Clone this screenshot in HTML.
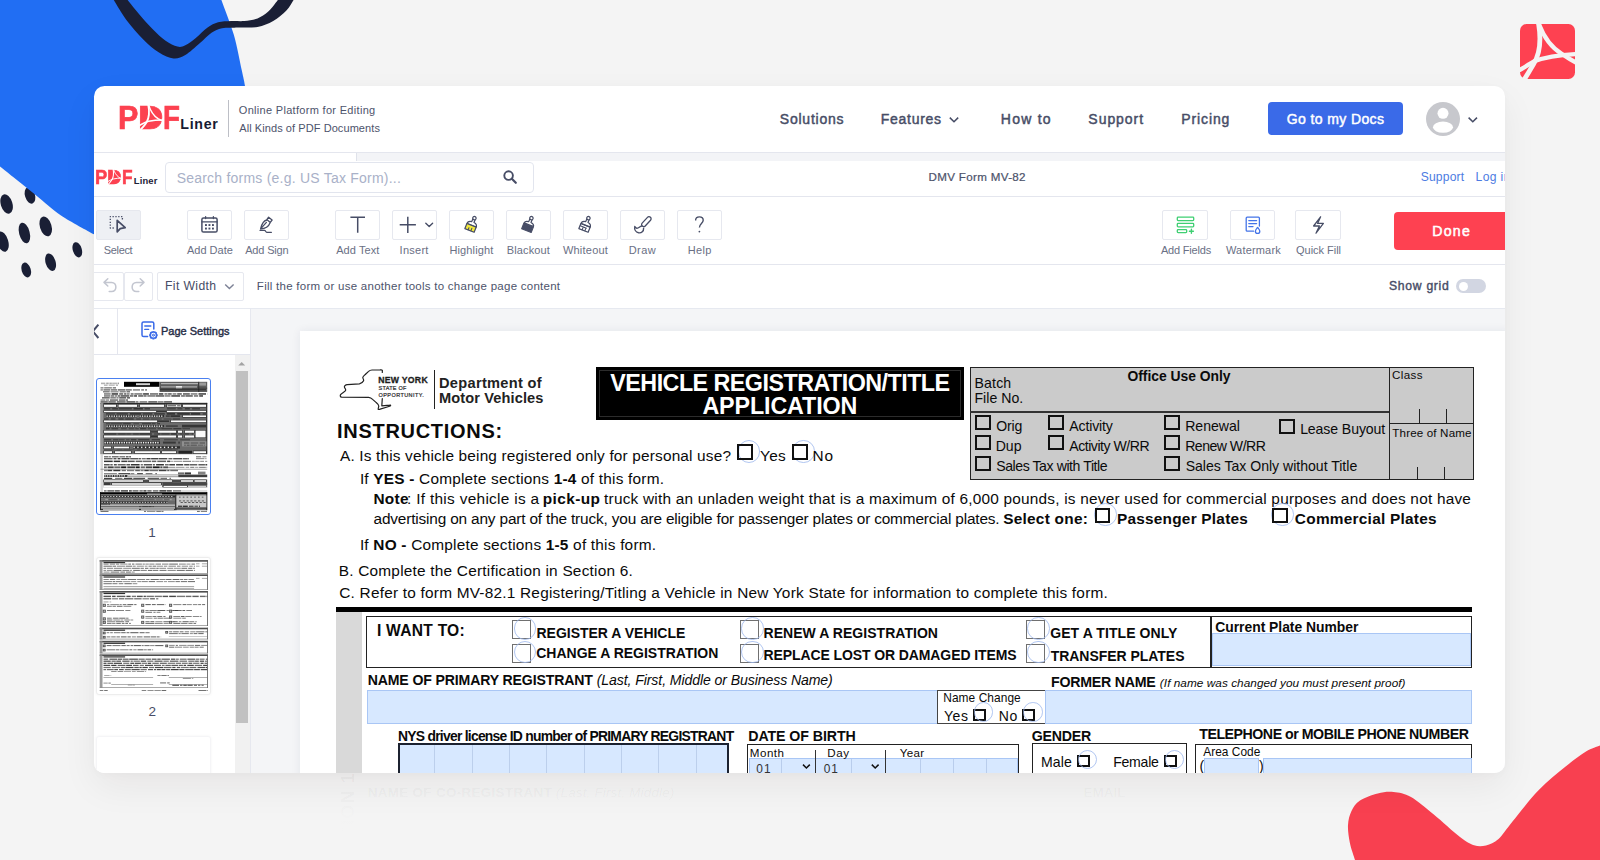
<!DOCTYPE html>
<html lang="en"><head><meta charset="utf-8"><title>DMV Form MV-82 - PDFLiner</title>
<style>
html,body{margin:0;padding:0;}
body{width:1600px;height:860px;overflow:hidden;background:#f4f4f4;font-family:'Liberation Sans',sans-serif;position:relative;}
.t{position:absolute;white-space:pre;display:block;}
.abs{position:absolute;}
#card{position:absolute;left:94px;top:86px;width:1411px;height:687px;border-radius:10.5px;background:#fff;overflow:hidden;box-shadow:0 14px 36px rgba(40,20,20,0.06), 0 2px 10px rgba(40,20,20,0.025);}
#in{position:absolute;left:-94px;top:-86px;width:1600px;height:860px;}
.tb{position:absolute;top:210px;width:43.6px;height:27.8px;margin-left:-0.2px;border:1px solid #e6e8ef;border-radius:2px;background:#fff;box-sizing:content-box;}
.cb{position:absolute;border:2px solid #111;box-sizing:border-box;}
.fld{position:absolute;background:#d7e8ff;border:1px solid #a9c6f5;box-sizing:border-box;}
.ring{position:absolute;border:1px solid #9db8ee;border-radius:50%;box-sizing:border-box;opacity:.8}
.ln{position:absolute;background:#111;}
</style></head><body>

<svg class="abs" style="left:0;top:0" width="1600" height="860" viewBox="0 0 1600 860">
<g fill="#1a1f35">
<ellipse cx="30" cy="195.4" rx="5" ry="8.5" transform="rotate(-17 30 195.4)"/>
</g>
<path d="M-2,-2 L221.4,-2.0 C221.4,-1.7 219.3,-6.2 221.4,0.0 C223.5,6.2 230.5,23.3 233.9,35.0 C237.3,46.7 239.8,61.5 241.7,70.0 C243.5,78.5 243.9,79.3 245.0,86.0 C246.1,92.7 247.5,106.0 248.0,110.0 L248,300 L96,300 L96.0,236.0 C95.7,235.7 99.8,237.7 94.0,234.3 C88.2,230.9 70.8,222.0 61.0,215.4 C51.2,208.8 45.2,202.6 35.0,194.5 C24.8,186.4 6.3,171.7 0.0,166.6 C-6.3,161.5 -2.5,164.4 -3.0,164.0 Z" fill="#216ef3"/>
<path d="M112.0,-3.0 C112.3,-2.5 111.4,-3.8 113.8,0.0 C116.2,3.8 121.3,13.1 126.2,19.7 C131.1,26.3 137.8,33.9 143.3,39.4 C148.8,44.9 154.0,49.3 159.0,52.5 C164.0,55.7 169.1,58.0 173.5,58.4 C177.9,58.8 180.9,57.5 185.3,55.0 C189.7,52.5 195.3,47.0 199.7,43.3 C204.1,39.6 207.8,35.3 211.5,32.8 C215.2,30.3 217.6,29.1 222.0,28.2 C226.4,27.3 231.9,27.8 237.8,27.6 C243.7,27.4 251.6,28.0 257.5,26.9 C263.4,25.8 268.4,23.7 273.2,21.0 C278.0,18.3 283.0,14.0 286.4,10.5 C289.8,7.0 292.1,2.2 293.6,0.0 C295.1,-2.2 295.2,-2.5 295.5,-3.0 L279.5,-3.0 C279.2,-2.5 278.4,-0.9 277.8,0.0 C277.2,0.9 277.5,0.6 275.9,2.6 C274.3,4.6 271.1,9.2 268.0,11.8 C264.9,14.4 261.4,16.9 257.5,18.4 C253.6,19.9 248.8,20.6 244.4,21.0 C240.0,21.4 235.6,20.8 231.2,21.0 C226.8,21.2 222.0,21.2 218.1,22.3 C214.2,23.4 211.3,25.0 207.6,27.6 C203.9,30.2 199.5,35.0 195.8,38.0 C192.1,41.0 188.4,43.9 185.3,45.3 C182.2,46.7 180.7,47.4 177.4,46.6 C174.1,45.8 169.8,43.7 165.6,40.7 C161.4,37.8 156.9,33.3 152.5,28.9 C148.1,24.5 143.6,19.2 139.4,14.4 C135.2,9.6 129.9,2.9 127.6,0.0 C125.3,-2.9 125.9,-2.5 125.6,-3.0 Z" fill="#1a1f35"/>
<g fill="#1a1f35">
<ellipse cx="6.6" cy="204" rx="5.8" ry="10" transform="rotate(-17 6.6 204)"/>
<ellipse cx="45.7" cy="226.4" rx="5.8" ry="10.2" transform="rotate(-17 45.7 226.4)"/>
<ellipse cx="24.4" cy="233" rx="5.3" ry="10.5" transform="rotate(-15 24.4 233)"/>
<ellipse cx="2.6" cy="241.6" rx="5.6" ry="10.5" transform="rotate(-17 2.6 241.6)"/>
<ellipse cx="77.3" cy="249.8" rx="4.5" ry="7.8" transform="rotate(-17 77.3 249.8)"/>
<ellipse cx="50.6" cy="262.2" rx="5" ry="9" transform="rotate(-17 50.6 262.2)"/>
<ellipse cx="26.2" cy="270" rx="4.6" ry="7.6" transform="rotate(-17 26.2 270)"/>
</g>
<path d="M1604.0,744.0 C1603.3,744.2 1603.0,744.1 1600.0,745.4 C1597.0,746.6 1591.8,747.9 1586.0,751.5 C1580.2,755.1 1572.9,760.6 1565.0,767.0 C1557.1,773.4 1547.5,780.9 1538.8,790.0 C1530.0,799.1 1519.2,813.3 1512.5,821.5 C1505.8,829.7 1502.9,835.0 1498.5,839.0 C1494.1,843.0 1490.1,844.4 1486.0,845.4 C1481.9,846.4 1478.3,846.6 1474.0,845.2 C1469.7,843.8 1466.7,842.1 1460.0,837.0 C1453.3,831.9 1441.9,821.2 1433.8,814.5 C1425.6,807.8 1417.7,800.8 1411.0,797.0 C1404.3,793.2 1399.0,792.6 1393.5,792.0 C1388.0,791.4 1383.3,792.1 1377.8,793.5 C1372.2,794.9 1364.4,797.6 1360.0,800.5 C1355.6,803.4 1353.5,806.9 1351.5,811.0 C1349.5,815.1 1348.3,819.8 1348.0,825.0 C1347.7,830.2 1348.6,836.7 1349.8,842.5 C1350.9,848.3 1354.0,856.4 1355.0,860.0 C1356.0,863.6 1355.8,863.3 1356.0,864.0 L1604,864 Z" fill="#f84050"/>
</svg>
<svg class="abs" style="left:1520px;top:24px" width="55" height="55" viewBox="0 0 55 55">
<rect x="0" y="0" width="55" height="55" rx="6.5" fill="#fe4151"/>
<g fill="none" stroke="#f4f4f4" stroke-linecap="butt">
<path d="M18.5,-1 C21,14 20,30 13.6,40 C10,46 7.4,50.4 4,56" stroke-width="4.8"/>
<path d="M18.5,-1 C24,14 32,24 42,30 C47,33.5 52,36.5 56,38.5" stroke-width="4.3"/>
<path d="M-1,46.4 C6,42.4 10,39.5 14,37.3 C24,33.5 36,31 56,30" stroke-width="4.3"/>
</g></svg>
<span class="t" style="left:367.70px;top:786.00px;font-size:13.4px;line-height:13.4px;font-weight:700;color:rgba(0,0,0,.055);letter-spacing:0.345px;">NAME OF CO-REGISTRANT</span>
<span class="t" style="left:555.87px;top:786.00px;font-size:13.4px;line-height:13.4px;font-weight:400;color:rgba(0,0,0,.05);font-style:italic;letter-spacing:0.192px;">(Last, First, Middle)</span>
<span class="t" style="left:1083.60px;top:786.00px;font-size:13.4px;line-height:13.4px;font-weight:700;color:rgba(0,0,0,.04);letter-spacing:0.038px;">EMAIL</span>
<span class="t" style="left:339px;top:886px;font-size:18px;line-height:18px;font-weight:700;color:rgba(0,0,0,.045);transform-origin:0 0;transform:rotate(-90deg);letter-spacing:1.2px;width:114px;text-align:right">SECTION 1</span>
<div class="abs" style="left:0;top:776px;width:1340px;height:84px;background:linear-gradient(to bottom,rgba(244,244,244,0) 0,rgba(244,244,244,.35) 18px,rgba(244,244,244,.9) 42px,#f4f4f4 56px)"></div>
<div id="card"><div id="in">
<span class="abs" style="left:0;top:0"><span class="t" style="left:118.20px;top:100.90px;font-size:32.2px;line-height:32.2px;font-weight:700;color:#fc4150;-webkit-text-stroke:0.7px #fc4150;transform-origin:0 0;transform:scale(0.947,1.045)">P</span><span class="t" style="left:137.80px;top:100.90px;font-size:32.2px;line-height:32.2px;font-weight:700;color:#fc4150;-webkit-text-stroke:0.7px #fc4150;transform-origin:0 0;transform:scale(1.090,1.045)">D</span><span class="t" style="left:162.70px;top:100.90px;font-size:32.2px;line-height:32.2px;font-weight:700;color:#fc4150;-webkit-text-stroke:0.7px #fc4150;transform-origin:0 0;transform:scale(0.860,1.045)">F</span></span>
<svg class="abs" style="left:136px;top:102px" width="30" height="30" viewBox="136 102 30 30"><path d="M144.6,109.6 H152 C157.4,109.6 158.4,114 158.4,117.6 C158.4,121.6 157.4,126 152,126 H144.6 Z" fill="#fc4150"/>
<g fill="none" stroke="#fff" stroke-linecap="butt">
<path d="M148.2,104.6 C149.5,111 149.3,117.6 146.6,122.2 C145,125 143,127.2 139.8,130.4" stroke-width="1.8"/>
<path d="M148.5,104.6 C150.4,111 153.6,115.7 158,118.7 C159.6,119.7 161,120.5 163.2,121.3" stroke-width="1.55"/>
<path d="M139.2,125.6 C142.6,123.7 145.6,122.1 148.6,121.3 C153,120.3 157.6,119.9 163.2,119.9" stroke-width="1.55"/>
</g></svg>
<span class="t" style="left:180.35px;top:117.00px;font-size:14.2px;line-height:14.2px;font-weight:700;color:#161b33;letter-spacing:0.694px;">Liner</span>
<div class="abs" style="left:228px;top:100px;width:1.4px;height:37px;background:#bdbfc6"></div>
<span class="t" style="left:238.78px;top:105.00px;font-size:11px;line-height:11px;font-weight:400;color:#4d536b;letter-spacing:0.309px;">Online Platform for Editing</span>
<span class="t" style="left:239.28px;top:123.00px;font-size:11px;line-height:11px;font-weight:400;color:#4d536b;letter-spacing:0.074px;">All Kinds of PDF Documents</span>
<span class="t" style="left:779.86px;top:112.00px;font-size:14px;line-height:14px;font-weight:400;color:#474d66;letter-spacing:0.756px;-webkit-text-stroke:0.45px #474d66;">Solutions</span>
<span class="t" style="left:880.85px;top:112.00px;font-size:14px;line-height:14px;font-weight:400;color:#474d66;letter-spacing:0.701px;-webkit-text-stroke:0.45px #474d66;">Features</span>
<svg class="abs" style="left:948px;top:115px" width="12" height="10" viewBox="0 0 12 10"><path d="M1.8,2.6 L6,6.8 L10.2,2.6" fill="none" stroke="#474d66" stroke-width="1.5"/></svg>
<span class="t" style="left:1000.85px;top:112.00px;font-size:14px;line-height:14px;font-weight:400;color:#474d66;letter-spacing:1.232px;-webkit-text-stroke:0.45px #474d66;">How to</span>
<span class="t" style="left:1088.36px;top:112.00px;font-size:14px;line-height:14px;font-weight:400;color:#474d66;letter-spacing:0.949px;-webkit-text-stroke:0.45px #474d66;">Support</span>
<span class="t" style="left:1181.35px;top:112.00px;font-size:14px;line-height:14px;font-weight:400;color:#474d66;letter-spacing:0.876px;-webkit-text-stroke:0.45px #474d66;">Pricing</span>
<div class="abs" style="left:1268px;top:102px;width:135px;height:33px;background:#3a6ae8;border-radius:4px"></div>
<span class="t" style="left:1286.80px;top:112.00px;font-size:14px;line-height:14px;font-weight:400;color:#fff;letter-spacing:0.385px;-webkit-text-stroke:0.45px #fff;">Go to my Docs</span>
<svg class="abs" style="left:1426px;top:102px" width="34" height="34" viewBox="0 0 34 34">
<circle cx="17" cy="17" r="17" fill="#c7c8cd"/><circle cx="17" cy="11.3" r="5.5" fill="#fff"/>
<ellipse cx="17" cy="25.2" rx="10" ry="5.6" fill="#fff"/></svg>
<svg class="abs" style="left:1467px;top:115px" width="12" height="10" viewBox="0 0 12 10"><path d="M1.6,2.6 L5.8,6.8 L10,2.6" fill="none" stroke="#474d66" stroke-width="1.5"/></svg>
<div class="abs" style="left:94px;top:152px;width:1411px;height:1px;background:#e4e6ee"></div>
<div class="abs" style="left:356px;top:153px;width:1149px;height:8px;background:#f3f4f7"></div>
<div class="abs" style="left:356px;top:153px;width:1px;height:8px;background:#dfe2ea"></div>
<span class="abs" style="left:0;top:0"><span class="t" style="left:94.56px;top:167.10px;font-size:19.6px;line-height:19.6px;font-weight:700;color:#fc4150;-webkit-text-stroke:0.5px #fc4150;transform-origin:0 0;transform:scale(0.940,1.054)">P</span><span class="t" style="left:106.98px;top:167.10px;font-size:19.6px;line-height:19.6px;font-weight:700;color:#fc4150;-webkit-text-stroke:0.5px #fc4150;transform-origin:0 0;transform:scale(1.020,1.054)">D</span><span class="t" style="left:122.36px;top:167.10px;font-size:19.6px;line-height:19.6px;font-weight:700;color:#fc4150;-webkit-text-stroke:0.5px #fc4150;transform-origin:0 0;transform:scale(0.886,1.054)">F</span></span>
<svg class="abs" style="left:104px;top:166px" width="22" height="22" viewBox="104 166 22 22"><g transform="translate(108 169.25) scale(.608 .641) translate(-140 -106.1)"><path d="M144.6,109.6 H152 C157.4,109.6 158.4,114 158.4,117.6 C158.4,121.6 157.4,126 152,126 H144.6 Z" fill="#fc4150"/>
<g fill="none" stroke="#fff" stroke-linecap="butt">
<path d="M148.2,104.6 C149.5,111 149.3,117.6 146.6,122.2 C145,125 143,127.2 139.8,130.4" stroke-width="1.8"/>
<path d="M148.5,104.6 C150.4,111 153.6,115.7 158,118.7 C159.6,119.7 161,120.5 163.2,121.3" stroke-width="1.55"/>
<path d="M139.2,125.6 C142.6,123.7 145.6,122.1 148.6,121.3 C153,120.3 157.6,119.9 163.2,119.9" stroke-width="1.55"/>
</g></g></svg>
<span class="t" style="left:133.77px;top:176.00px;font-size:9.4px;line-height:9.4px;font-weight:700;color:#1d2238;letter-spacing:0.162px;">Liner</span>
<div class="abs" style="left:165px;top:162px;width:367px;height:29px;border:1px solid #e2e5ee;border-radius:4px;box-sizing:content-box"></div>
<span class="t" style="left:176.66px;top:171.00px;font-size:14px;line-height:14px;font-weight:400;color:#a9b1c8;letter-spacing:0.222px;">Search forms (e.g. US Tax Form)...</span>
<svg class="abs" style="left:502px;top:169px" width="16" height="16" viewBox="0 0 16 16"><circle cx="6.6" cy="6.6" r="4.3" fill="none" stroke="#474d66" stroke-width="1.9"/><path d="M9.8,9.8 L13.8,13.8" stroke="#474d66" stroke-width="2.2" stroke-linecap="round"/></svg>
<span class="t" style="left:928.55px;top:171.00px;font-size:11.6px;line-height:11.6px;font-weight:400;color:#4d536b;letter-spacing:0.328px;-webkit-text-stroke:0.22px #4d536b;">DMV Form MV-82</span>
<span class="t" style="left:1420.75px;top:171.00px;font-size:12.1px;line-height:12.1px;font-weight:400;color:#4c7be2;letter-spacing:0.163px;">Support</span>
<span class="t" style="left:1475.61px;top:171.00px;font-size:12.1px;line-height:12.1px;font-weight:400;color:#4c7be2;letter-spacing:0.365px;">Log in</span>
<div class="abs" style="left:94px;top:196px;width:1411px;height:1px;background:#e4e6ee"></div>
<div class="tb" style="left:96px;background:#eef0f4;border-color:#e6e8ee"></div>
<div class="tb" style="left:187px"></div>
<div class="tb" style="left:244px"></div>
<div class="tb" style="left:335px"></div>
<div class="tb" style="left:392px"></div>
<div class="tb" style="left:449px"></div>
<div class="tb" style="left:506px"></div>
<div class="tb" style="left:563px"></div>
<div class="tb" style="left:620px"></div>
<div class="tb" style="left:677px"></div>
<div class="tb" style="left:1162.5px"></div>
<div class="tb" style="left:1230px"></div>
<div class="tb" style="left:1295.5px"></div>
<span class="t" style="left:103.70px;top:245.00px;font-size:11px;line-height:11px;font-weight:400;color:#6a7085;letter-spacing:-0.320px;">Select</span>
<span class="t" style="left:186.98px;top:245.00px;font-size:11px;line-height:11px;font-weight:400;color:#6a7085;letter-spacing:0.005px;">Add Date</span>
<span class="t" style="left:245.18px;top:245.00px;font-size:11px;line-height:11px;font-weight:400;color:#6a7085;letter-spacing:-0.160px;">Add Sign</span>
<span class="t" style="left:336.18px;top:245.00px;font-size:11px;line-height:11px;font-weight:400;color:#6a7085;letter-spacing:0.085px;">Add Text</span>
<span class="t" style="left:399.58px;top:245.00px;font-size:11px;line-height:11px;font-weight:400;color:#6a7085;letter-spacing:0.256px;">Insert</span>
<span class="t" style="left:449.40px;top:245.00px;font-size:11px;line-height:11px;font-weight:400;color:#6a7085;letter-spacing:0.134px;">Highlight</span>
<span class="t" style="left:506.70px;top:245.00px;font-size:11px;line-height:11px;font-weight:400;color:#6a7085;letter-spacing:0.140px;">Blackout</span>
<span class="t" style="left:562.95px;top:245.00px;font-size:11px;line-height:11px;font-weight:400;color:#6a7085;letter-spacing:0.215px;">Whiteout</span>
<span class="t" style="left:628.70px;top:245.00px;font-size:11px;line-height:11px;font-weight:400;color:#6a7085;letter-spacing:0.468px;">Draw</span>
<span class="t" style="left:687.70px;top:245.00px;font-size:11px;line-height:11px;font-weight:400;color:#6a7085;letter-spacing:0.313px;">Help</span>
<span class="t" style="left:1160.98px;top:245.00px;font-size:11px;line-height:11px;font-weight:400;color:#6a7085;letter-spacing:-0.196px;">Add Fields</span>
<span class="t" style="left:1225.95px;top:245.00px;font-size:11px;line-height:11px;font-weight:400;color:#6a7085;letter-spacing:0.182px;">Watermark</span>
<span class="t" style="left:1296.08px;top:245.00px;font-size:11px;line-height:11px;font-weight:400;color:#6a7085;letter-spacing:-0.031px;">Quick Fill</span>
<svg class="abs" style="left:94px;top:205px" width="650" height="40" viewBox="94 205 650 40" fill="none" stroke="#474d66" stroke-width="1.5" stroke-linecap="round" stroke-linejoin="round">
<!-- select -->
<path d="M122.4,219.4 V216.6 H110.3 V228 H114.4" stroke-width="1.3" stroke-dasharray="1.3 1.55" stroke-linecap="butt"/>
<path d="M117.2,220.3 V231.8 L120.2,228.6 L125.2,227.6 Z" stroke-width="1.7"/>
<!-- calendar -->
<rect x="201.9" y="217.9" width="15.2" height="14.2" rx="1.6" stroke-width="1.5"/>
<path d="M202,221.8 H217 M205.6,216.6 V218.6 M213.4,216.6 V218.6" stroke-width="1.3"/>
<g stroke="none" fill="#474d66"><rect x="205" y="224.1" width="1.9" height="1.9"/><rect x="208.5" y="224.1" width="1.9" height="1.9"/><rect x="212" y="224.1" width="1.9" height="1.9"/><rect x="205" y="227.6" width="1.9" height="1.9"/><rect x="208.5" y="227.6" width="1.9" height="1.9"/><rect x="212" y="227.6" width="1.9" height="1.9"/></g>
<!-- pen -->
<path d="M268.6,217.2 L272.1,220 L270.3,222.4 L266.8,219.6 Z M267,220 C263.5,220.5 262,223 260.6,228.8 C265.5,228.6 268.4,227.2 270,223 M260.8,228.6 L266.4,222.4 M260,230.3 H264.6 C265.6,230.3 265.6,232.3 266.8,232.3 H271.4" stroke-width="1.3"/>
<!-- T -->
<path d="M350.4,217.2 H365 M357.7,217.2 V232.8" stroke-width="1.5" stroke-linecap="butt"/>
<!-- plus -->
<path d="M399.7,224.8 H415.9 M407.8,216.7 V232.9" stroke-width="1.5" stroke-linecap="butt"/>
<path d="M425.8,223.2 L429.2,226.4 L432.6,223.2" stroke-width="1.4"/>
<!-- highlight brush -->
<g transform="translate(471.6 225.2) rotate(22) scale(.94)">
<circle cx="0" cy="-8" r="1.8" stroke-width="1.3"/>
<path d="M-1.3,-6.4 V-3.6 C-3.6,-3.4 -5.2,-2.6 -5.3,0 H5.3 C5.2,-2.6 3.6,-3.4 1.3,-3.6 V-6.4" stroke-width="1.3"/>
<path d="M-5.3,0.2 H5.3 V6 H-5.3 Z" fill="#f2e83c" stroke-width="1.3"/>
<path d="M-1.6,5.8 V3.6 M1.5,5.8 V2.8" stroke-width="1.1"/>
</g>
<!-- blackout brush -->
<g transform="translate(528.6 225.2) rotate(22) scale(.94)">
<circle cx="0" cy="-8" r="1.8" stroke-width="1.3"/>
<path d="M-1.3,-6.4 V-3.6 C-3.6,-3.4 -5.2,-2.6 -5.3,-0.6 H5.3 C5.2,-2.6 3.6,-3.4 1.3,-3.6 V-6.4" stroke-width="1.3"/>
<path d="M-5.5,0 H5.5 V6.2 H-5.5 Z" fill="#474d66" stroke-width="1.1"/>
</g>
<!-- whiteout brush -->
<g transform="translate(585.6 225.2) rotate(22) scale(.94)">
<circle cx="0" cy="-8" r="1.8" stroke-width="1.3"/>
<path d="M-1.3,-6.4 V-3.6 C-3.6,-3.4 -5.2,-2.6 -5.3,0 H5.3 C5.2,-2.6 3.6,-3.4 1.3,-3.6 V-6.4" stroke-width="1.3"/>
<path d="M-5.3,0.2 H5.3 V6 H-5.3 Z" stroke-width="1.3"/>
<path d="M-1.6,5.8 V3.6 M1.5,5.8 V2.8 M-5,2.6 H2" stroke-width="1.1"/>
</g>
<!-- draw brush -->
<g transform="translate(646.2 221.8) rotate(43)"><rect x="-2.1" y="-6.2" width="4.2" height="12" rx="2.1" stroke-width="1.3"/></g>
<path d="M641.8,226 C639.6,226.2 638.8,228.4 636.8,228.2 C635.6,228 635,227.2 634.8,226.4 C634.2,229.4 635.6,232.2 638.6,232.8 C641.6,233.2 643.8,231.2 643.6,228.2" stroke-width="1.4"/>
<!-- help -->
<path d="M695.6,220.4 C695.6,215.6 703.2,215.8 703.2,220.2 C703.2,223.4 699.4,223.6 699.4,227.6" stroke-width="1.4" stroke-linecap="butt"/>
<circle cx="699.4" cy="231.6" r="0.9" fill="#474d66" stroke="none"/>
</svg>
<svg class="abs" style="left:1160px;top:205px" width="190" height="40" viewBox="1160 205 190 40" fill="none" stroke-linecap="round" stroke-linejoin="round">
<g stroke="#3ecf72" stroke-width="1.3"><rect x="1177.3" y="217.2" width="16.4" height="3.4" rx="0.8"/><rect x="1177.3" y="223.4" width="16.4" height="3.4" rx="0.8"/><rect x="1177.3" y="229.6" width="9.4" height="3" rx="0.8"/><path d="M1189.4,231.2 H1193.4 M1191.4,229.2 V233.2" stroke-width="1.4"/></g>
<g stroke="#4474e8" stroke-width="1.3"><path d="M1259.4,226 V218.2 C1259.4,217.6 1259,217.2 1258.4,217.2 H1247.2 C1246.6,217.2 1246.2,217.6 1246.2,218.2 V230.2 C1246.2,230.8 1246.6,231.2 1247.2,231.2 H1253.6"/><path d="M1248.8,220.6 H1256.6 M1248.8,223.6 H1256.6 M1248.8,226.6 H1253"/><path d="M1257.6,227.4 C1259,229.2 1259.8,230 1259.8,231.2 C1259.8,232.4 1258.8,233.4 1257.6,233.4 C1256.4,233.4 1255.4,232.4 1255.4,231.2 C1255.4,230 1256.2,229.2 1257.6,227.4 Z"/></g>
<path d="M1320.6,216.8 L1313.6,226 H1319.4 L1316,233.2 L1323.4,223.4 H1317.6 Z" stroke="#474d66" stroke-width="1.3"/>
</svg>
<div class="abs" style="left:1394px;top:212px;width:130px;height:38px;background:#fe4151;border-radius:4px"></div>
<span class="t" style="left:1432.24px;top:224.00px;font-size:14.2px;line-height:14.2px;font-weight:400;color:#fff;letter-spacing:1.225px;-webkit-text-stroke:0.5px #fff;">Done</span>
<div class="abs" style="left:94px;top:264px;width:1411px;height:1px;background:#e4e6ee"></div>
<div class="abs" style="left:89px;top:272px;width:33px;height:27px;border:1px solid #e6e8ef;border-radius:2px"></div>
<div class="abs" style="left:124.4px;top:272px;width:26.5px;height:27px;border:1px solid #e6e8ef;border-radius:2px"></div>
<svg class="abs" style="left:100px;top:276px" width="50" height="20" viewBox="100 276 50 20" fill="none" stroke="#c3c6d0" stroke-width="1.5" stroke-linecap="round" stroke-linejoin="round">
<path d="M107.8,278.8 L104,282.4 L107.8,286 M104.4,282.4 H111.6 C117.2,282.4 117.4,291.6 111.6,291.6 H109.2"/>
<path d="M140.2,278.8 L144,282.4 L140.2,286 M143.6,282.4 H136.4 C130.8,282.4 130.6,291.6 136.4,291.6 H138.8"/>
</svg>
<div class="abs" style="left:156.8px;top:272px;width:85px;height:27px;border:1px solid #e6e8ef;border-radius:2px"></div>
<span class="t" style="left:165.00px;top:280.00px;font-size:12.2px;line-height:12.2px;font-weight:400;color:#474d66;letter-spacing:0.377px;">Fit Width</span>
<svg class="abs" style="left:223px;top:281px" width="13" height="10" viewBox="0 0 13 10"><path d="M2.2,3.4 L6.4,7.6 L10.6,3.4" fill="none" stroke="#7d8296" stroke-width="1.4"/></svg>
<span class="t" style="left:256.86px;top:281.00px;font-size:11.5px;line-height:11.5px;font-weight:400;color:#4d536b;letter-spacing:0.266px;">Fill the form or use another tools to change page content</span>
<span class="t" style="left:1389.05px;top:280.00px;font-size:12.2px;line-height:12.2px;font-weight:400;color:#474d66;letter-spacing:0.692px;-webkit-text-stroke:0.4px #474d66;">Show grid</span>
<div class="abs" style="left:1456px;top:279px;width:30px;height:14px;border-radius:7px;background:#d2d6e2"></div>
<div class="abs" style="left:1459px;top:281.5px;width:9px;height:9px;border-radius:5px;background:#fff"></div>
<div class="abs" style="left:94px;top:308px;width:1411px;height:470px;background:#f4f5f7"></div>
<div class="abs" style="left:94px;top:308px;width:156px;height:470px;background:#fff"></div>
<div class="abs" style="left:94px;top:307.6px;width:1411px;height:1px;background:#e6e9f0"></div>
<div class="abs" style="left:94px;top:354px;width:156px;height:1px;background:#e4e6ee"></div>
<div class="abs" style="left:249.6px;top:308px;width:1px;height:470px;background:#e6e8ef"></div>
<div class="abs" style="left:117px;top:308px;width:1px;height:46px;background:#e4e6ee"></div>
<svg class="abs" style="left:90px;top:322px" width="12" height="18" viewBox="90 322 12 18"><path d="M98.4,324.6 L92.8,331.3 L98.4,338" fill="none" stroke="#474d66" stroke-width="2"/></svg>
<svg class="abs" style="left:140px;top:320px" width="20" height="22" viewBox="140 320 20 22" fill="none" stroke="#3a6ae8" stroke-width="1.5" stroke-linecap="round" stroke-linejoin="round">
<path d="M153.8,329 V323.6 C153.8,322.6 153.2,322 152.2,322 H143.6 C142.6,322 142,322.6 142,323.6 V335 C142,336 142.6,336.6 143.6,336.6 H147.6"/>
<path d="M144.8,326 H150.8 M144.8,329.4 H148.6" stroke-width="1.4"/>
<circle cx="153.4" cy="335.2" r="4.6" fill="#fff" stroke="none"/><circle cx="153.4" cy="335.2" r="3.1" stroke-width="1.5"/><circle cx="153.4" cy="335.2" r="1" stroke-width="1"/>
<path d="M153.4,331 V331.8 M153.4,338.6 V339.4 M149.2,335.2 H150 M156.8,335.2 H157.6 M150.4,332.2 L151,332.8 M155.8,337.6 L156.4,338.2 M156.4,332.2 L155.8,332.8 M151,337.6 L150.4,338.2" stroke-width="2" stroke-linecap="butt"/>
</svg>
<span class="t" style="left:160.90px;top:326.00px;font-size:11px;line-height:11px;font-weight:400;color:#262c45;letter-spacing:0.017px;-webkit-text-stroke:0.4px #262c45;">Page Settings</span>
<div class="abs" style="left:234.5px;top:355px;width:15.5px;height:420px;background:#f1f1f1"></div>
<div class="abs" style="left:235.5px;top:371px;width:12.5px;height:351.5px;background:#c1c1c1"></div>
<svg class="abs" style="left:236px;top:360px" width="12" height="8" viewBox="0 0 12 8"><path d="M2.2,5.6 L5.7,2 L9.2,5.6 Z" fill="#a3a3a3"/></svg>
<div class="abs" style="left:95.5px;top:377.5px;width:115.5px;height:137px;border:1.5px solid #4a80f0;border-radius:3px;box-sizing:border-box;background:#fff"></div>
<svg class="abs" style="left:92px;top:372px;filter:blur(.45px)" width="130" height="150" viewBox="92 372 130 150"><rect x="101.0" y="382.6" width="4.3" height="1.6" fill="#111" opacity="0.32"/><rect x="106.2" y="382.6" width="2.5" height="1.6" fill="#111" opacity="0.38"/><rect x="109.4" y="382.6" width="2.4" height="1.6" fill="#111" opacity="0.37"/><rect x="112.2" y="382.6" width="5.0" height="1.6" fill="#111" opacity="0.30"/><rect x="117.7" y="382.6" width="1.3" height="1.6" fill="#111" opacity="0.42"/><rect x="104.0" y="384.6" width="3.6" height="1.2" fill="#111" opacity="0.35"/><rect x="108.7" y="384.6" width="6.0" height="1.2" fill="#111" opacity="0.32"/><rect x="115.9" y="384.6" width="2.1" height="1.2" fill="#111" opacity="0.38"/><rect x="124.0" y="381.8" width="35.5" height="5.0" fill="#000" opacity="1.00"/><rect x="136.0" y="383.2" width="14.0" height="2.0" fill="#e8e8e8" opacity="0.90"/><rect x="159.5" y="381.8" width="47.7" height="10.2" fill="#5e5e5e" opacity="1.00"/><rect x="161.0" y="383.0" width="37.0" height="1.2" fill="#bdbdbd" opacity="0.90"/><rect x="161.0" y="386.4" width="36.0" height="1.2" fill="#cfcfcf" opacity="0.80"/><rect x="199.0" y="382.6" width="7.0" height="3.0" fill="#9a9a9a" opacity="1.00"/><rect x="160.0" y="389.0" width="46.0" height="1.4" fill="#333" opacity="0.90"/><rect x="176.0" y="386.0" width="6.0" height="2.5" fill="#f0f0f0" opacity="0.90"/><rect x="198.4" y="381.8" width="0.8" height="10.2" fill="#222" opacity="1.00"/><rect x="159.5" y="387.8" width="47.7" height="0.6" fill="#222" opacity="0.90"/><rect x="100.5" y="387.2" width="3.0" height="1.3" fill="#111" opacity="0.55"/><rect x="104.2" y="387.2" width="7.7" height="1.3" fill="#111" opacity="0.57"/><rect x="112.7" y="387.2" width="3.3" height="1.3" fill="#111" opacity="0.62"/><rect x="100.5" y="389.2" width="2.4" height="1.4" fill="#111" opacity="0.50"/><rect x="103.5" y="389.2" width="6.8" height="1.4" fill="#111" opacity="0.60"/><rect x="110.9" y="389.2" width="6.1" height="1.4" fill="#111" opacity="0.61"/><rect x="117.7" y="389.2" width="7.6" height="1.4" fill="#111" opacity="0.67"/><rect x="125.8" y="389.2" width="6.0" height="1.4" fill="#111" opacity="0.63"/><rect x="132.9" y="389.2" width="7.1" height="1.4" fill="#111" opacity="0.56"/><rect x="141.2" y="389.2" width="2.8" height="1.4" fill="#111" opacity="0.60"/><rect x="145.1" y="389.2" width="1.9" height="1.4" fill="#111" opacity="0.62"/><rect x="103.0" y="391.2" width="6.7" height="1.2" fill="#111" opacity="0.64"/><rect x="110.5" y="391.2" width="8.1" height="1.2" fill="#111" opacity="0.53"/><rect x="119.6" y="391.2" width="6.2" height="1.2" fill="#111" opacity="0.60"/><rect x="126.5" y="391.2" width="3.5" height="1.2" fill="#111" opacity="0.69"/><rect x="104.0" y="393.2" width="6.6" height="1.5" fill="#111" opacity="0.57"/><rect x="111.6" y="393.2" width="6.5" height="1.5" fill="#111" opacity="0.85"/><rect x="119.2" y="393.2" width="4.0" height="1.5" fill="#111" opacity="0.67"/><rect x="124.1" y="393.2" width="2.2" height="1.5" fill="#111" opacity="0.69"/><rect x="126.8" y="393.2" width="2.8" height="1.5" fill="#111" opacity="0.57"/><rect x="130.7" y="393.2" width="2.9" height="1.5" fill="#111" opacity="0.63"/><rect x="134.3" y="393.2" width="8.1" height="1.5" fill="#111" opacity="0.58"/><rect x="143.1" y="393.2" width="5.8" height="1.5" fill="#111" opacity="0.82"/><rect x="150.0" y="393.2" width="8.0" height="1.5" fill="#111" opacity="0.64"/><rect x="158.8" y="393.2" width="4.5" height="1.5" fill="#111" opacity="0.82"/><rect x="164.5" y="393.2" width="3.1" height="1.5" fill="#111" opacity="0.60"/><rect x="168.1" y="393.2" width="3.6" height="1.5" fill="#111" opacity="0.70"/><rect x="172.6" y="393.2" width="3.8" height="1.5" fill="#111" opacity="0.55"/><rect x="177.2" y="393.2" width="4.6" height="1.5" fill="#111" opacity="0.72"/><rect x="183.0" y="393.2" width="6.8" height="1.5" fill="#111" opacity="0.71"/><rect x="190.7" y="393.2" width="6.7" height="1.5" fill="#111" opacity="0.57"/><rect x="198.5" y="393.2" width="7.5" height="1.5" fill="#111" opacity="0.81"/><rect x="207.0" y="393.2" width="0.2" height="1.5" fill="#111" opacity="0.67"/><rect x="104.0" y="395.2" width="6.4" height="1.5" fill="#111" opacity="0.57"/><rect x="110.9" y="395.2" width="3.5" height="1.5" fill="#111" opacity="0.60"/><rect x="115.0" y="395.2" width="2.4" height="1.5" fill="#111" opacity="0.55"/><rect x="117.9" y="395.2" width="2.7" height="1.5" fill="#111" opacity="0.66"/><rect x="121.0" y="395.2" width="8.1" height="1.5" fill="#111" opacity="0.74"/><rect x="129.7" y="395.2" width="3.8" height="1.5" fill="#111" opacity="0.66"/><rect x="134.1" y="395.2" width="2.9" height="1.5" fill="#111" opacity="0.81"/><rect x="138.2" y="395.2" width="5.3" height="1.5" fill="#111" opacity="0.70"/><rect x="143.9" y="395.2" width="2.7" height="1.5" fill="#111" opacity="0.65"/><rect x="147.3" y="395.2" width="7.8" height="1.5" fill="#111" opacity="0.60"/><rect x="155.5" y="395.2" width="8.7" height="1.5" fill="#111" opacity="0.71"/><rect x="164.7" y="395.2" width="5.8" height="1.5" fill="#111" opacity="0.56"/><rect x="171.3" y="395.2" width="8.8" height="1.5" fill="#111" opacity="0.81"/><rect x="181.1" y="395.2" width="3.8" height="1.5" fill="#111" opacity="0.66"/><rect x="185.4" y="395.2" width="7.4" height="1.5" fill="#111" opacity="0.71"/><rect x="193.9" y="395.2" width="4.3" height="1.5" fill="#111" opacity="0.62"/><rect x="199.2" y="395.2" width="3.8" height="1.5" fill="#111" opacity="0.81"/><rect x="102.0" y="397.2" width="7.7" height="1.3" fill="#111" opacity="0.73"/><rect x="110.3" y="397.2" width="5.6" height="1.3" fill="#111" opacity="0.62"/><rect x="116.4" y="397.2" width="2.2" height="1.3" fill="#111" opacity="0.60"/><rect x="119.2" y="397.2" width="6.8" height="1.3" fill="#111" opacity="0.79"/><rect x="126.8" y="397.2" width="3.2" height="1.3" fill="#111" opacity="0.80"/><rect x="100.5" y="399.4" width="4.6" height="1.3" fill="#111" opacity="0.55"/><rect x="105.6" y="399.4" width="3.4" height="1.3" fill="#111" opacity="0.54"/><rect x="109.9" y="399.4" width="8.3" height="1.3" fill="#111" opacity="0.71"/><rect x="119.0" y="399.4" width="6.6" height="1.3" fill="#111" opacity="0.70"/><rect x="126.0" y="399.4" width="2.0" height="1.3" fill="#111" opacity="0.73"/><rect x="100.5" y="401.2" width="7.3" height="1.4" fill="#111" opacity="0.69"/><rect x="108.3" y="401.2" width="7.5" height="1.4" fill="#111" opacity="0.65"/><rect x="116.9" y="401.2" width="8.8" height="1.4" fill="#111" opacity="0.67"/><rect x="126.4" y="401.2" width="8.6" height="1.4" fill="#111" opacity="0.77"/><rect x="135.5" y="401.2" width="2.9" height="1.4" fill="#111" opacity="0.60"/><rect x="139.6" y="401.2" width="7.6" height="1.4" fill="#111" opacity="0.60"/><rect x="148.3" y="401.2" width="8.9" height="1.4" fill="#111" opacity="0.75"/><rect x="157.8" y="401.2" width="5.8" height="1.4" fill="#111" opacity="0.59"/><rect x="164.1" y="401.2" width="7.9" height="1.4" fill="#111" opacity="0.75"/><rect x="100.5" y="402.9" width="106.7" height="51.3" fill="#6b6b6b" opacity="1.00"/><rect x="100.5" y="402.9" width="106.7" height="0.8" fill="#111" opacity="1.00"/><rect x="100.5" y="402.9" width="2.9" height="51.3" fill="#9a9a9a" opacity="0.90"/><rect x="206.4" y="402.9" width="0.8" height="51.3" fill="#222" opacity="1.00"/><rect x="103.5" y="404.1" width="13.0" height="3.3" fill="#1e1e1e" opacity="0.90"/><rect x="104.0" y="404.6" width="12.0" height="2.3" fill="#fbfbfb" opacity="1.00"/><rect x="118.0" y="404.1" width="19.5" height="3.3" fill="#1e1e1e" opacity="0.90"/><rect x="118.5" y="404.6" width="18.5" height="2.3" fill="#fbfbfb" opacity="1.00"/><rect x="139.5" y="404.1" width="25.0" height="3.3" fill="#1e1e1e" opacity="0.90"/><rect x="140.0" y="404.6" width="24.0" height="2.3" fill="#fbfbfb" opacity="1.00"/><rect x="182.5" y="404.1" width="24.0" height="3.3" fill="#1e1e1e" opacity="0.90"/><rect x="183.0" y="404.6" width="23.0" height="2.3" fill="#fbfbfb" opacity="1.00"/><rect x="166.5" y="404.1" width="15.0" height="3.3" fill="#1e1e1e" opacity="0.90"/><rect x="167.0" y="404.6" width="14.0" height="2.3" fill="#fbfbfb" opacity="1.00"/><rect x="167.5" y="405.0" width="8.5" height="1.4" fill="#111" opacity="0.56"/><rect x="177.1" y="405.0" width="3.4" height="1.4" fill="#111" opacity="0.51"/><rect x="104.0" y="408.0" width="6.2" height="1.5" fill="#1c1c1c" opacity="0.52"/><rect x="112.2" y="408.0" width="5.9" height="1.5" fill="#1c1c1c" opacity="0.58"/><rect x="118.9" y="408.0" width="13.0" height="1.5" fill="#1c1c1c" opacity="0.56"/><rect x="133.5" y="408.0" width="9.4" height="1.5" fill="#1c1c1c" opacity="0.72"/><rect x="144.5" y="408.0" width="5.5" height="1.5" fill="#1c1c1c" opacity="0.60"/><rect x="167.0" y="408.0" width="8.8" height="1.5" fill="#1c1c1c" opacity="0.46"/><rect x="177.4" y="408.0" width="5.0" height="1.5" fill="#1c1c1c" opacity="0.45"/><rect x="184.9" y="408.0" width="4.9" height="1.5" fill="#1c1c1c" opacity="0.59"/><rect x="192.1" y="408.0" width="7.9" height="1.5" fill="#1c1c1c" opacity="0.55"/><rect x="103.5" y="410.3" width="53.0" height="2.4" fill="#1e1e1e" opacity="0.90"/><rect x="104.0" y="410.8" width="52.0" height="1.4" fill="#fbfbfb" opacity="1.00"/><rect x="166.5" y="410.3" width="40.0" height="2.4" fill="#1e1e1e" opacity="0.90"/><rect x="167.0" y="410.8" width="39.0" height="1.4" fill="#fbfbfb" opacity="1.00"/><rect x="157.0" y="410.6" width="9.0" height="1.4" fill="#1c1c1c" opacity="0.69"/><rect x="106.0" y="413.2" width="9.2" height="1.4" fill="#1c1c1c" opacity="0.59"/><rect x="116.4" y="413.2" width="11.5" height="1.4" fill="#1c1c1c" opacity="0.68"/><rect x="129.8" y="413.2" width="11.4" height="1.4" fill="#1c1c1c" opacity="0.82"/><rect x="142.7" y="413.2" width="9.7" height="1.4" fill="#1c1c1c" opacity="0.68"/><rect x="154.2" y="413.2" width="10.6" height="1.4" fill="#1c1c1c" opacity="0.66"/><rect x="166.7" y="413.2" width="8.3" height="1.4" fill="#1c1c1c" opacity="0.83"/><rect x="177.2" y="413.2" width="12.6" height="1.4" fill="#1c1c1c" opacity="0.83"/><rect x="191.0" y="413.2" width="9.2" height="1.4" fill="#1c1c1c" opacity="0.83"/><rect x="202.7" y="413.2" width="3.3" height="1.4" fill="#1c1c1c" opacity="0.55"/><rect x="106.0" y="415.0" width="31.0" height="2.3" fill="#2a2a2a" opacity="0.95"/><rect x="106.5" y="415.5" width="1.3" height="1.3" fill="#f4f4f4" opacity="1.00"/><rect x="108.9" y="415.5" width="1.3" height="1.3" fill="#f4f4f4" opacity="1.00"/><rect x="111.3" y="415.5" width="1.3" height="1.3" fill="#f4f4f4" opacity="1.00"/><rect x="113.7" y="415.5" width="1.3" height="1.3" fill="#f4f4f4" opacity="1.00"/><rect x="116.1" y="415.5" width="1.3" height="1.3" fill="#f4f4f4" opacity="1.00"/><rect x="118.5" y="415.5" width="1.3" height="1.3" fill="#f4f4f4" opacity="1.00"/><rect x="120.9" y="415.5" width="1.3" height="1.3" fill="#f4f4f4" opacity="1.00"/><rect x="123.3" y="415.5" width="1.3" height="1.3" fill="#f4f4f4" opacity="1.00"/><rect x="125.7" y="415.5" width="1.3" height="1.3" fill="#f4f4f4" opacity="1.00"/><rect x="128.1" y="415.5" width="1.3" height="1.3" fill="#f4f4f4" opacity="1.00"/><rect x="130.5" y="415.5" width="1.3" height="1.3" fill="#f4f4f4" opacity="1.00"/><rect x="132.9" y="415.5" width="1.3" height="1.3" fill="#f4f4f4" opacity="1.00"/><rect x="135.3" y="415.5" width="1.3" height="1.3" fill="#f4f4f4" opacity="1.00"/><rect x="139.0" y="415.0" width="25.0" height="2.3" fill="#2a2a2a" opacity="0.95"/><rect x="139.5" y="415.5" width="1.3" height="1.3" fill="#f4f4f4" opacity="1.00"/><rect x="141.9" y="415.5" width="1.3" height="1.3" fill="#f4f4f4" opacity="1.00"/><rect x="144.3" y="415.5" width="1.3" height="1.3" fill="#f4f4f4" opacity="1.00"/><rect x="146.7" y="415.5" width="1.3" height="1.3" fill="#f4f4f4" opacity="1.00"/><rect x="149.1" y="415.5" width="1.3" height="1.3" fill="#f4f4f4" opacity="1.00"/><rect x="151.5" y="415.5" width="1.3" height="1.3" fill="#f4f4f4" opacity="1.00"/><rect x="153.9" y="415.5" width="1.3" height="1.3" fill="#f4f4f4" opacity="1.00"/><rect x="156.3" y="415.5" width="1.3" height="1.3" fill="#f4f4f4" opacity="1.00"/><rect x="158.7" y="415.5" width="1.3" height="1.3" fill="#f4f4f4" opacity="1.00"/><rect x="161.1" y="415.5" width="1.3" height="1.3" fill="#f4f4f4" opacity="1.00"/><rect x="166.0" y="415.2" width="3.8" height="1.8" fill="#1c1c1c" opacity="0.52"/><rect x="170.5" y="415.2" width="9.5" height="1.8" fill="#1c1c1c" opacity="0.69"/><rect x="182.5" y="414.9" width="24.0" height="2.6" fill="#1e1e1e" opacity="0.90"/><rect x="183.0" y="415.4" width="23.0" height="1.6" fill="#fbfbfb" opacity="1.00"/><rect x="104.0" y="418.4" width="4.7" height="1.2" fill="#1c1c1c" opacity="0.62"/><rect x="110.8" y="418.4" width="4.6" height="1.2" fill="#1c1c1c" opacity="0.67"/><rect x="118.3" y="418.4" width="5.4" height="1.2" fill="#1c1c1c" opacity="0.69"/><rect x="125.3" y="418.4" width="8.4" height="1.2" fill="#1c1c1c" opacity="0.70"/><rect x="136.2" y="418.4" width="4.8" height="1.2" fill="#1c1c1c" opacity="0.54"/><rect x="142.8" y="418.4" width="6.7" height="1.2" fill="#1c1c1c" opacity="0.47"/><rect x="150.8" y="418.4" width="10.9" height="1.2" fill="#1c1c1c" opacity="0.43"/><rect x="163.6" y="418.4" width="7.8" height="1.2" fill="#1c1c1c" opacity="0.43"/><rect x="172.8" y="418.4" width="7.2" height="1.2" fill="#1c1c1c" opacity="0.56"/><rect x="103.5" y="419.9" width="54.0" height="2.8" fill="#1e1e1e" opacity="0.90"/><rect x="104.0" y="420.4" width="53.0" height="1.8" fill="#fbfbfb" opacity="1.00"/><rect x="158.0" y="420.4" width="11.0" height="1.6" fill="#1c1c1c" opacity="0.69"/><rect x="170.5" y="419.9" width="36.0" height="2.8" fill="#1e1e1e" opacity="0.90"/><rect x="171.0" y="420.4" width="35.0" height="1.8" fill="#fbfbfb" opacity="1.00"/><rect x="106.0" y="423.2" width="4.2" height="1.1" fill="#1c1c1c" opacity="0.49"/><rect x="110.8" y="423.2" width="11.6" height="1.1" fill="#1c1c1c" opacity="0.50"/><rect x="123.1" y="423.2" width="7.6" height="1.1" fill="#1c1c1c" opacity="0.68"/><rect x="133.3" y="423.2" width="5.8" height="1.1" fill="#1c1c1c" opacity="0.46"/><rect x="142.0" y="423.2" width="9.3" height="1.1" fill="#1c1c1c" opacity="0.62"/><rect x="152.0" y="423.2" width="3.6" height="1.1" fill="#1c1c1c" opacity="0.61"/><rect x="157.2" y="423.2" width="2.8" height="1.1" fill="#1c1c1c" opacity="0.68"/><rect x="106.0" y="425.0" width="31.0" height="2.3" fill="#2a2a2a" opacity="0.95"/><rect x="106.5" y="425.5" width="1.3" height="1.3" fill="#f4f4f4" opacity="1.00"/><rect x="108.9" y="425.5" width="1.3" height="1.3" fill="#f4f4f4" opacity="1.00"/><rect x="111.3" y="425.5" width="1.3" height="1.3" fill="#f4f4f4" opacity="1.00"/><rect x="113.7" y="425.5" width="1.3" height="1.3" fill="#f4f4f4" opacity="1.00"/><rect x="116.1" y="425.5" width="1.3" height="1.3" fill="#f4f4f4" opacity="1.00"/><rect x="118.5" y="425.5" width="1.3" height="1.3" fill="#f4f4f4" opacity="1.00"/><rect x="120.9" y="425.5" width="1.3" height="1.3" fill="#f4f4f4" opacity="1.00"/><rect x="123.3" y="425.5" width="1.3" height="1.3" fill="#f4f4f4" opacity="1.00"/><rect x="125.7" y="425.5" width="1.3" height="1.3" fill="#f4f4f4" opacity="1.00"/><rect x="128.1" y="425.5" width="1.3" height="1.3" fill="#f4f4f4" opacity="1.00"/><rect x="130.5" y="425.5" width="1.3" height="1.3" fill="#f4f4f4" opacity="1.00"/><rect x="132.9" y="425.5" width="1.3" height="1.3" fill="#f4f4f4" opacity="1.00"/><rect x="135.3" y="425.5" width="1.3" height="1.3" fill="#f4f4f4" opacity="1.00"/><rect x="139.0" y="425.0" width="25.0" height="2.3" fill="#2a2a2a" opacity="0.95"/><rect x="139.5" y="425.5" width="1.3" height="1.3" fill="#f4f4f4" opacity="1.00"/><rect x="141.9" y="425.5" width="1.3" height="1.3" fill="#f4f4f4" opacity="1.00"/><rect x="144.3" y="425.5" width="1.3" height="1.3" fill="#f4f4f4" opacity="1.00"/><rect x="146.7" y="425.5" width="1.3" height="1.3" fill="#f4f4f4" opacity="1.00"/><rect x="149.1" y="425.5" width="1.3" height="1.3" fill="#f4f4f4" opacity="1.00"/><rect x="151.5" y="425.5" width="1.3" height="1.3" fill="#f4f4f4" opacity="1.00"/><rect x="153.9" y="425.5" width="1.3" height="1.3" fill="#f4f4f4" opacity="1.00"/><rect x="156.3" y="425.5" width="1.3" height="1.3" fill="#f4f4f4" opacity="1.00"/><rect x="158.7" y="425.5" width="1.3" height="1.3" fill="#f4f4f4" opacity="1.00"/><rect x="161.1" y="425.5" width="1.3" height="1.3" fill="#f4f4f4" opacity="1.00"/><rect x="166.0" y="425.2" width="11.8" height="1.8" fill="#1c1c1c" opacity="0.48"/><rect x="182.0" y="424.8" width="24.4" height="2.6" fill="#333" opacity="0.95"/><rect x="106.0" y="428.1" width="3.7" height="1.2" fill="#1c1c1c" opacity="0.66"/><rect x="111.4" y="428.1" width="6.7" height="1.2" fill="#1c1c1c" opacity="0.57"/><rect x="120.9" y="428.1" width="5.9" height="1.2" fill="#1c1c1c" opacity="0.46"/><rect x="128.7" y="428.1" width="5.6" height="1.2" fill="#1c1c1c" opacity="0.45"/><rect x="135.2" y="428.1" width="3.6" height="1.2" fill="#1c1c1c" opacity="0.48"/><rect x="140.0" y="428.1" width="6.4" height="1.2" fill="#1c1c1c" opacity="0.63"/><rect x="147.6" y="428.1" width="8.5" height="1.2" fill="#1c1c1c" opacity="0.47"/><rect x="157.5" y="428.1" width="3.2" height="1.2" fill="#1c1c1c" opacity="0.49"/><rect x="161.2" y="428.1" width="11.1" height="1.2" fill="#1c1c1c" opacity="0.57"/><rect x="173.3" y="428.1" width="8.2" height="1.2" fill="#1c1c1c" opacity="0.68"/><rect x="182.3" y="428.1" width="7.7" height="1.2" fill="#1c1c1c" opacity="0.54"/><rect x="103.5" y="430.1" width="47.0" height="3.2" fill="#1e1e1e" opacity="0.90"/><rect x="104.0" y="430.6" width="46.0" height="2.2" fill="#fbfbfb" opacity="1.00"/><rect x="151.0" y="430.6" width="6.0" height="2.0" fill="#1c1c1c" opacity="0.57"/><rect x="157.5" y="430.1" width="19.0" height="3.2" fill="#1e1e1e" opacity="0.90"/><rect x="158.0" y="430.6" width="18.0" height="2.2" fill="#fbfbfb" opacity="1.00"/><rect x="177.5" y="430.1" width="5.0" height="3.2" fill="#1e1e1e" opacity="0.90"/><rect x="178.0" y="430.6" width="4.0" height="2.2" fill="#fbfbfb" opacity="1.00"/><rect x="184.5" y="430.1" width="10.0" height="3.2" fill="#1e1e1e" opacity="0.90"/><rect x="185.0" y="430.6" width="9.0" height="2.2" fill="#fbfbfb" opacity="1.00"/><rect x="103.5" y="434.9" width="47.0" height="3.2" fill="#1e1e1e" opacity="0.90"/><rect x="104.0" y="435.4" width="46.0" height="2.2" fill="#fbfbfb" opacity="1.00"/><rect x="151.0" y="435.4" width="6.0" height="2.0" fill="#1c1c1c" opacity="0.74"/><rect x="157.5" y="434.9" width="19.0" height="3.2" fill="#1e1e1e" opacity="0.90"/><rect x="158.0" y="435.4" width="18.0" height="2.2" fill="#fbfbfb" opacity="1.00"/><rect x="177.5" y="434.9" width="5.0" height="3.2" fill="#1e1e1e" opacity="0.90"/><rect x="178.0" y="435.4" width="4.0" height="2.2" fill="#fbfbfb" opacity="1.00"/><rect x="184.5" y="434.9" width="10.0" height="3.2" fill="#1e1e1e" opacity="0.90"/><rect x="185.0" y="435.4" width="9.0" height="2.2" fill="#fbfbfb" opacity="1.00"/><rect x="195.0" y="430.1" width="11.1" height="7.8" fill="#1e1e1e" opacity="0.90"/><rect x="195.5" y="430.6" width="10.1" height="6.8" fill="#fbfbfb" opacity="1.00"/><rect x="104.0" y="433.4" width="12.2" height="1.2" fill="#1c1c1c" opacity="0.62"/><rect x="118.2" y="433.4" width="7.5" height="1.2" fill="#1c1c1c" opacity="0.52"/><rect x="126.3" y="433.4" width="4.4" height="1.2" fill="#1c1c1c" opacity="0.44"/><rect x="133.1" y="433.4" width="5.8" height="1.2" fill="#1c1c1c" opacity="0.47"/><rect x="139.6" y="433.4" width="12.3" height="1.2" fill="#1c1c1c" opacity="0.66"/><rect x="154.1" y="433.4" width="6.1" height="1.2" fill="#1c1c1c" opacity="0.49"/><rect x="161.4" y="433.4" width="8.1" height="1.2" fill="#1c1c1c" opacity="0.46"/><rect x="171.1" y="433.4" width="5.9" height="1.2" fill="#1c1c1c" opacity="0.69"/><rect x="179.9" y="433.4" width="9.0" height="1.2" fill="#1c1c1c" opacity="0.49"/><rect x="191.8" y="433.4" width="1.2" height="1.2" fill="#1c1c1c" opacity="0.52"/><rect x="104.0" y="439.0" width="7.2" height="1.4" fill="#1c1c1c" opacity="0.55"/><rect x="113.0" y="439.0" width="5.2" height="1.4" fill="#1c1c1c" opacity="0.56"/><rect x="118.7" y="439.0" width="5.9" height="1.4" fill="#1c1c1c" opacity="0.45"/><rect x="126.1" y="439.0" width="3.5" height="1.4" fill="#1c1c1c" opacity="0.43"/><rect x="130.8" y="439.0" width="5.6" height="1.4" fill="#1c1c1c" opacity="0.58"/><rect x="138.2" y="439.0" width="11.3" height="1.4" fill="#1c1c1c" opacity="0.60"/><rect x="151.7" y="439.0" width="8.3" height="1.4" fill="#1c1c1c" opacity="0.53"/><rect x="164.0" y="439.0" width="13.8" height="1.4" fill="#1c1c1c" opacity="0.40"/><rect x="180.1" y="439.0" width="9.9" height="1.4" fill="#1c1c1c" opacity="0.37"/><rect x="104.0" y="441.4" width="56.0" height="2.6" fill="#2a2a2a" opacity="0.95"/><rect x="104.5" y="441.9" width="1.3" height="1.6" fill="#f4f4f4" opacity="1.00"/><rect x="106.9" y="441.9" width="1.3" height="1.6" fill="#f4f4f4" opacity="1.00"/><rect x="109.3" y="441.9" width="1.3" height="1.6" fill="#f4f4f4" opacity="1.00"/><rect x="111.7" y="441.9" width="1.3" height="1.6" fill="#f4f4f4" opacity="1.00"/><rect x="114.1" y="441.9" width="1.3" height="1.6" fill="#f4f4f4" opacity="1.00"/><rect x="116.5" y="441.9" width="1.3" height="1.6" fill="#f4f4f4" opacity="1.00"/><rect x="118.9" y="441.9" width="1.3" height="1.6" fill="#f4f4f4" opacity="1.00"/><rect x="121.3" y="441.9" width="1.3" height="1.6" fill="#f4f4f4" opacity="1.00"/><rect x="123.7" y="441.9" width="1.3" height="1.6" fill="#f4f4f4" opacity="1.00"/><rect x="126.1" y="441.9" width="1.3" height="1.6" fill="#f4f4f4" opacity="1.00"/><rect x="128.5" y="441.9" width="1.3" height="1.6" fill="#f4f4f4" opacity="1.00"/><rect x="130.9" y="441.9" width="1.3" height="1.6" fill="#f4f4f4" opacity="1.00"/><rect x="133.3" y="441.9" width="1.3" height="1.6" fill="#f4f4f4" opacity="1.00"/><rect x="135.7" y="441.9" width="1.3" height="1.6" fill="#f4f4f4" opacity="1.00"/><rect x="138.1" y="441.9" width="1.3" height="1.6" fill="#f4f4f4" opacity="1.00"/><rect x="140.5" y="441.9" width="1.3" height="1.6" fill="#f4f4f4" opacity="1.00"/><rect x="142.9" y="441.9" width="1.3" height="1.6" fill="#f4f4f4" opacity="1.00"/><rect x="145.3" y="441.9" width="1.3" height="1.6" fill="#f4f4f4" opacity="1.00"/><rect x="147.7" y="441.9" width="1.3" height="1.6" fill="#f4f4f4" opacity="1.00"/><rect x="150.1" y="441.9" width="1.3" height="1.6" fill="#f4f4f4" opacity="1.00"/><rect x="152.5" y="441.9" width="1.3" height="1.6" fill="#f4f4f4" opacity="1.00"/><rect x="154.9" y="441.9" width="1.3" height="1.6" fill="#f4f4f4" opacity="1.00"/><rect x="157.3" y="441.9" width="1.3" height="1.6" fill="#f4f4f4" opacity="1.00"/><rect x="163.0" y="441.6" width="12.8" height="2.0" fill="#1c1c1c" opacity="0.64"/><rect x="178.1" y="441.6" width="1.9" height="2.0" fill="#1c1c1c" opacity="0.49"/><rect x="182.0" y="441.2" width="24.4" height="5.2" fill="#8f8f8f" opacity="1.00"/><rect x="184.0" y="442.4" width="5.5" height="1.2" fill="#111" opacity="0.47"/><rect x="190.6" y="442.4" width="7.8" height="1.2" fill="#111" opacity="0.43"/><rect x="199.5" y="442.4" width="5.5" height="1.2" fill="#111" opacity="0.45"/><rect x="184.0" y="444.6" width="2.2" height="1.2" fill="#111" opacity="0.35"/><rect x="186.9" y="444.6" width="2.7" height="1.2" fill="#111" opacity="0.47"/><rect x="190.5" y="444.6" width="6.4" height="1.2" fill="#111" opacity="0.43"/><rect x="197.8" y="444.6" width="5.4" height="1.2" fill="#111" opacity="0.33"/><rect x="204.3" y="444.6" width="0.7" height="1.2" fill="#111" opacity="0.41"/><rect x="103.5" y="446.1" width="8.0" height="2.8" fill="#1e1e1e" opacity="0.90"/><rect x="104.0" y="446.6" width="7.0" height="1.8" fill="#fbfbfb" opacity="1.00"/><rect x="113.5" y="446.1" width="16.0" height="2.8" fill="#1e1e1e" opacity="0.90"/><rect x="114.0" y="446.6" width="15.0" height="1.8" fill="#fbfbfb" opacity="1.00"/><rect x="133.0" y="446.2" width="47.0" height="2.4" fill="#2a2a2a" opacity="0.95"/><rect x="133.5" y="446.7" width="1.3" height="1.4" fill="#f4f4f4" opacity="1.00"/><rect x="137.3" y="446.7" width="1.3" height="1.4" fill="#f4f4f4" opacity="1.00"/><rect x="141.1" y="446.7" width="1.3" height="1.4" fill="#f4f4f4" opacity="1.00"/><rect x="144.9" y="446.7" width="1.3" height="1.4" fill="#f4f4f4" opacity="1.00"/><rect x="148.7" y="446.7" width="1.3" height="1.4" fill="#f4f4f4" opacity="1.00"/><rect x="152.5" y="446.7" width="1.3" height="1.4" fill="#f4f4f4" opacity="1.00"/><rect x="156.3" y="446.7" width="1.3" height="1.4" fill="#f4f4f4" opacity="1.00"/><rect x="160.1" y="446.7" width="1.3" height="1.4" fill="#f4f4f4" opacity="1.00"/><rect x="163.9" y="446.7" width="1.3" height="1.4" fill="#f4f4f4" opacity="1.00"/><rect x="167.7" y="446.7" width="1.3" height="1.4" fill="#f4f4f4" opacity="1.00"/><rect x="171.5" y="446.7" width="1.3" height="1.4" fill="#f4f4f4" opacity="1.00"/><rect x="175.3" y="446.7" width="1.3" height="1.4" fill="#f4f4f4" opacity="1.00"/><rect x="104.0" y="449.4" width="10.3" height="0.8" fill="#1c1c1c" opacity="0.38"/><rect x="116.6" y="449.4" width="5.8" height="0.8" fill="#1c1c1c" opacity="0.38"/><rect x="123.5" y="449.4" width="11.0" height="0.8" fill="#1c1c1c" opacity="0.41"/><rect x="136.9" y="449.4" width="13.7" height="0.8" fill="#1c1c1c" opacity="0.48"/><rect x="152.1" y="449.4" width="8.3" height="0.8" fill="#1c1c1c" opacity="0.52"/><rect x="162.8" y="449.4" width="9.8" height="0.8" fill="#1c1c1c" opacity="0.51"/><rect x="173.3" y="449.4" width="4.6" height="0.8" fill="#1c1c1c" opacity="0.42"/><rect x="103.5" y="450.7" width="9.0" height="3.0" fill="#1e1e1e" opacity="0.90"/><rect x="104.0" y="451.2" width="8.0" height="2.0" fill="#fbfbfb" opacity="1.00"/><rect x="114.5" y="450.7" width="17.0" height="3.0" fill="#1e1e1e" opacity="0.90"/><rect x="115.0" y="451.2" width="16.0" height="2.0" fill="#fbfbfb" opacity="1.00"/><rect x="134.5" y="450.7" width="26.0" height="3.0" fill="#1e1e1e" opacity="0.90"/><rect x="135.0" y="451.2" width="25.0" height="2.0" fill="#fbfbfb" opacity="1.00"/><rect x="161.5" y="450.7" width="15.0" height="3.0" fill="#1e1e1e" opacity="0.90"/><rect x="162.0" y="451.2" width="14.0" height="2.0" fill="#fbfbfb" opacity="1.00"/><rect x="178.5" y="450.8" width="13.5" height="2.8" fill="#222" opacity="0.95"/><rect x="193.0" y="450.7" width="13.5" height="3.0" fill="#1e1e1e" opacity="0.90"/><rect x="193.5" y="451.2" width="12.5" height="2.0" fill="#fbfbfb" opacity="1.00"/><rect x="100.5" y="454.2" width="2.5" height="37.8" fill="#d0d0d0" opacity="0.80"/><rect x="104.0" y="456.2" width="4.1" height="1.2" fill="#111" opacity="0.68"/><rect x="108.5" y="456.2" width="2.4" height="1.2" fill="#111" opacity="0.60"/><rect x="111.9" y="456.2" width="6.8" height="1.2" fill="#111" opacity="0.71"/><rect x="119.4" y="456.2" width="5.6" height="1.2" fill="#111" opacity="0.65"/><rect x="125.8" y="456.2" width="2.8" height="1.2" fill="#111" opacity="0.77"/><rect x="129.2" y="456.2" width="1.8" height="1.2" fill="#111" opacity="0.78"/><rect x="196.0" y="456.2" width="5.2" height="1.2" fill="#111" opacity="0.56"/><rect x="202.4" y="456.2" width="4.1" height="1.2" fill="#111" opacity="0.45"/><rect x="104.0" y="458.0" width="8.6" height="1.4" fill="#111" opacity="0.62"/><rect x="113.5" y="458.0" width="3.0" height="1.4" fill="#111" opacity="0.71"/><rect x="117.6" y="458.0" width="2.9" height="1.4" fill="#111" opacity="0.80"/><rect x="121.4" y="458.0" width="8.2" height="1.4" fill="#111" opacity="0.76"/><rect x="130.2" y="458.0" width="8.3" height="1.4" fill="#111" opacity="0.70"/><rect x="138.9" y="458.0" width="2.0" height="1.4" fill="#111" opacity="0.70"/><rect x="141.7" y="458.0" width="4.1" height="1.4" fill="#111" opacity="0.59"/><rect x="146.4" y="458.0" width="4.2" height="1.4" fill="#111" opacity="0.80"/><rect x="151.1" y="458.0" width="7.3" height="1.4" fill="#111" opacity="0.80"/><rect x="158.8" y="458.0" width="8.5" height="1.4" fill="#111" opacity="0.76"/><rect x="168.4" y="458.0" width="4.0" height="1.4" fill="#111" opacity="0.66"/><rect x="173.2" y="458.0" width="9.0" height="1.4" fill="#111" opacity="0.73"/><rect x="182.8" y="458.0" width="5.0" height="1.4" fill="#111" opacity="0.63"/><rect x="188.3" y="458.0" width="0.7" height="1.4" fill="#111" opacity="0.80"/><rect x="196.0" y="458.0" width="8.5" height="1.2" fill="#111" opacity="0.44"/><rect x="205.2" y="458.0" width="1.3" height="1.2" fill="#111" opacity="0.43"/><rect x="104.0" y="460.6" width="8.7" height="1.5" fill="#111" opacity="0.86"/><rect x="113.7" y="460.6" width="6.4" height="1.5" fill="#111" opacity="0.87"/><rect x="121.3" y="460.6" width="5.8" height="1.5" fill="#111" opacity="0.81"/><rect x="127.6" y="460.6" width="7.1" height="1.5" fill="#111" opacity="0.73"/><rect x="135.7" y="460.6" width="6.5" height="1.5" fill="#111" opacity="0.68"/><rect x="142.7" y="460.6" width="8.5" height="1.5" fill="#111" opacity="0.63"/><rect x="151.9" y="460.6" width="4.4" height="1.5" fill="#111" opacity="0.68"/><rect x="157.3" y="460.6" width="8.8" height="1.5" fill="#111" opacity="0.67"/><rect x="167.1" y="460.6" width="2.9" height="1.5" fill="#111" opacity="0.76"/><rect x="170.0" y="460.8" width="3.2" height="1.1" fill="#111" opacity="0.39"/><rect x="173.7" y="460.8" width="8.3" height="1.1" fill="#111" opacity="0.45"/><rect x="182.7" y="460.8" width="8.3" height="1.1" fill="#111" opacity="0.55"/><rect x="191.8" y="460.8" width="3.0" height="1.1" fill="#111" opacity="0.39"/><rect x="195.2" y="460.8" width="4.4" height="1.1" fill="#111" opacity="0.38"/><rect x="200.2" y="460.8" width="3.8" height="1.1" fill="#111" opacity="0.47"/><rect x="205.1" y="460.8" width="2.1" height="1.1" fill="#111" opacity="0.44"/><rect x="104.0" y="464.0" width="5.7" height="1.5" fill="#111" opacity="0.70"/><rect x="110.3" y="464.0" width="2.4" height="1.5" fill="#111" opacity="0.67"/><rect x="113.9" y="464.0" width="2.9" height="1.5" fill="#111" opacity="0.74"/><rect x="117.7" y="464.0" width="8.0" height="1.5" fill="#111" opacity="0.65"/><rect x="126.4" y="464.0" width="3.7" height="1.5" fill="#111" opacity="0.71"/><rect x="130.9" y="464.0" width="8.7" height="1.5" fill="#111" opacity="0.85"/><rect x="140.7" y="464.0" width="2.2" height="1.5" fill="#111" opacity="0.60"/><rect x="143.8" y="464.0" width="8.3" height="1.5" fill="#111" opacity="0.73"/><rect x="152.9" y="464.0" width="2.0" height="1.5" fill="#111" opacity="0.71"/><rect x="156.1" y="464.0" width="7.8" height="1.5" fill="#111" opacity="0.85"/><rect x="165.0" y="464.0" width="3.7" height="1.5" fill="#111" opacity="0.62"/><rect x="169.3" y="464.0" width="5.7" height="1.5" fill="#111" opacity="0.80"/><rect x="176.1" y="464.0" width="7.1" height="1.5" fill="#111" opacity="0.79"/><rect x="184.2" y="464.0" width="5.2" height="1.5" fill="#111" opacity="0.76"/><rect x="189.8" y="464.0" width="7.5" height="1.5" fill="#111" opacity="0.66"/><rect x="198.4" y="464.0" width="6.5" height="1.5" fill="#111" opacity="0.68"/><rect x="205.4" y="464.0" width="1.8" height="1.5" fill="#111" opacity="0.79"/><rect x="104.0" y="466.4" width="2.8" height="1.8" fill="#111" opacity="0.67"/><rect x="107.6" y="466.4" width="6.1" height="1.8" fill="#111" opacity="0.79"/><rect x="114.3" y="466.4" width="6.2" height="1.8" fill="#111" opacity="0.65"/><rect x="121.1" y="466.4" width="5.2" height="1.8" fill="#111" opacity="0.99"/><rect x="127.3" y="466.4" width="8.2" height="1.8" fill="#111" opacity="0.82"/><rect x="136.0" y="466.4" width="3.7" height="1.8" fill="#111" opacity="0.99"/><rect x="140.7" y="466.4" width="4.2" height="1.8" fill="#111" opacity="0.66"/><rect x="145.7" y="466.4" width="6.7" height="1.8" fill="#111" opacity="0.80"/><rect x="153.0" y="466.4" width="6.7" height="1.8" fill="#111" opacity="0.97"/><rect x="160.3" y="466.4" width="2.2" height="1.8" fill="#111" opacity="0.77"/><rect x="163.2" y="466.4" width="4.8" height="1.8" fill="#111" opacity="0.72"/><rect x="168.0" y="466.8" width="7.2" height="1.1" fill="#111" opacity="0.45"/><rect x="175.7" y="466.8" width="8.8" height="1.1" fill="#111" opacity="0.42"/><rect x="185.6" y="466.8" width="3.6" height="1.1" fill="#111" opacity="0.40"/><rect x="190.2" y="466.8" width="4.1" height="1.1" fill="#111" opacity="0.54"/><rect x="195.1" y="466.8" width="3.3" height="1.1" fill="#111" opacity="0.40"/><rect x="199.1" y="466.8" width="6.7" height="1.1" fill="#111" opacity="0.54"/><rect x="206.3" y="466.8" width="0.9" height="1.1" fill="#111" opacity="0.40"/><rect x="100.5" y="468.8" width="106.7" height="0.8" fill="#777" opacity="0.80"/><rect x="104.0" y="469.8" width="3.0" height="1.4" fill="#111" opacity="0.57"/><rect x="107.4" y="469.8" width="4.8" height="1.4" fill="#111" opacity="0.82"/><rect x="113.3" y="469.8" width="7.1" height="1.4" fill="#111" opacity="0.85"/><rect x="121.6" y="469.8" width="4.3" height="1.4" fill="#111" opacity="0.61"/><rect x="127.0" y="469.8" width="7.2" height="1.4" fill="#111" opacity="0.56"/><rect x="135.2" y="469.8" width="4.7" height="1.4" fill="#111" opacity="0.66"/><rect x="140.5" y="469.8" width="3.2" height="1.4" fill="#111" opacity="0.55"/><rect x="144.3" y="469.8" width="4.5" height="1.4" fill="#111" opacity="0.84"/><rect x="149.3" y="469.8" width="8.7" height="1.4" fill="#111" opacity="0.61"/><rect x="158.7" y="469.8" width="7.8" height="1.4" fill="#111" opacity="0.80"/><rect x="167.2" y="469.8" width="2.3" height="1.4" fill="#111" opacity="0.69"/><rect x="170.2" y="469.8" width="7.8" height="1.4" fill="#111" opacity="0.61"/><rect x="104.0" y="473.0" width="12.9" height="1.2" fill="#1c1c1c" opacity="0.52"/><rect x="118.4" y="473.0" width="11.9" height="1.2" fill="#1c1c1c" opacity="0.77"/><rect x="130.9" y="473.0" width="3.4" height="1.2" fill="#1c1c1c" opacity="0.53"/><rect x="137.1" y="473.0" width="5.8" height="1.2" fill="#1c1c1c" opacity="0.76"/><rect x="145.7" y="473.0" width="6.7" height="1.2" fill="#1c1c1c" opacity="0.60"/><rect x="155.3" y="473.0" width="1.7" height="1.2" fill="#1c1c1c" opacity="0.60"/><rect x="178.0" y="472.4" width="6.5" height="2.0" fill="#1c1c1c" opacity="0.64"/><rect x="185.0" y="472.4" width="6.0" height="2.0" fill="#1c1c1c" opacity="0.87"/><rect x="198.0" y="471.6" width="7.5" height="2.8" fill="#1c1c1c" opacity="0.55"/><rect x="104.0" y="474.8" width="23.0" height="2.2" fill="#2a2a2a" opacity="0.95"/><rect x="104.5" y="475.3" width="1.3" height="1.2" fill="#f4f4f4" opacity="1.00"/><rect x="106.9" y="475.3" width="1.3" height="1.2" fill="#f4f4f4" opacity="1.00"/><rect x="109.3" y="475.3" width="1.3" height="1.2" fill="#f4f4f4" opacity="1.00"/><rect x="111.7" y="475.3" width="1.3" height="1.2" fill="#f4f4f4" opacity="1.00"/><rect x="114.1" y="475.3" width="1.3" height="1.2" fill="#f4f4f4" opacity="1.00"/><rect x="116.5" y="475.3" width="1.3" height="1.2" fill="#f4f4f4" opacity="1.00"/><rect x="118.9" y="475.3" width="1.3" height="1.2" fill="#f4f4f4" opacity="1.00"/><rect x="121.3" y="475.3" width="1.3" height="1.2" fill="#f4f4f4" opacity="1.00"/><rect x="123.7" y="475.3" width="1.3" height="1.2" fill="#f4f4f4" opacity="1.00"/><rect x="127.5" y="474.7" width="51.0" height="2.4" fill="#1e1e1e" opacity="0.90"/><rect x="128.0" y="475.2" width="50.0" height="1.4" fill="#fbfbfb" opacity="1.00"/><rect x="178.5" y="474.6" width="28.7" height="2.6" fill="#333" opacity="0.95"/><rect x="104.0" y="477.8" width="8.2" height="1.2" fill="#1c1c1c" opacity="0.84"/><rect x="115.1" y="477.8" width="7.3" height="1.2" fill="#1c1c1c" opacity="0.60"/><rect x="123.9" y="477.8" width="8.4" height="1.2" fill="#1c1c1c" opacity="0.83"/><rect x="133.3" y="477.8" width="11.8" height="1.2" fill="#1c1c1c" opacity="0.76"/><rect x="147.7" y="477.8" width="11.5" height="1.2" fill="#1c1c1c" opacity="0.72"/><rect x="160.5" y="477.8" width="6.5" height="1.2" fill="#1c1c1c" opacity="0.63"/><rect x="169.5" y="477.8" width="1.5" height="1.2" fill="#1c1c1c" opacity="0.58"/><rect x="103.4" y="479.4" width="103.8" height="8.2" fill="#6b6b6b" opacity="1.00"/><rect x="103.5" y="479.7" width="40.0" height="2.6" fill="#1e1e1e" opacity="0.90"/><rect x="104.0" y="480.2" width="39.0" height="1.6" fill="#fbfbfb" opacity="1.00"/><rect x="148.5" y="479.7" width="24.0" height="2.6" fill="#1e1e1e" opacity="0.90"/><rect x="149.0" y="480.2" width="23.0" height="1.6" fill="#fbfbfb" opacity="1.00"/><rect x="180.5" y="479.7" width="13.0" height="2.6" fill="#1e1e1e" opacity="0.90"/><rect x="181.0" y="480.2" width="12.0" height="1.6" fill="#fbfbfb" opacity="1.00"/><rect x="194.0" y="479.7" width="12.5" height="2.6" fill="#1e1e1e" opacity="0.90"/><rect x="194.5" y="480.2" width="11.5" height="1.6" fill="#fbfbfb" opacity="1.00"/><rect x="144.0" y="480.2" width="4.0" height="1.6" fill="#1c1c1c" opacity="0.47"/><rect x="173.0" y="480.2" width="7.0" height="1.6" fill="#1c1c1c" opacity="0.55"/><rect x="104.0" y="483.2" width="6.0" height="1.6" fill="#1c1c1c" opacity="0.75"/><rect x="111.5" y="482.7" width="50.0" height="2.6" fill="#1e1e1e" opacity="0.90"/><rect x="112.0" y="483.2" width="49.0" height="1.6" fill="#fbfbfb" opacity="1.00"/><rect x="163.0" y="482.6" width="44.2" height="2.6" fill="#444" opacity="0.90"/><rect x="103.4" y="485.4" width="58.6" height="2.2" fill="#fff" opacity="1.00"/><rect x="163.0" y="485.3" width="24.5" height="2.2" fill="#1e1e1e" opacity="0.90"/><rect x="163.5" y="485.8" width="23.5" height="1.2" fill="#fbfbfb" opacity="1.00"/><rect x="188.0" y="485.8" width="18.0" height="1.2" fill="#cfcfcf" opacity="1.00"/><rect x="103.4" y="487.6" width="103.8" height="2.4" fill="#fff" opacity="1.00"/><rect x="104.0" y="490.2" width="2.6" height="1.4" fill="#111" opacity="0.62"/><rect x="107.4" y="490.2" width="7.0" height="1.4" fill="#111" opacity="0.73"/><rect x="114.9" y="490.2" width="4.9" height="1.4" fill="#111" opacity="0.78"/><rect x="120.8" y="490.2" width="7.2" height="1.4" fill="#111" opacity="0.85"/><rect x="129.0" y="490.2" width="2.8" height="1.4" fill="#111" opacity="0.85"/><rect x="132.5" y="490.2" width="6.0" height="1.4" fill="#111" opacity="0.70"/><rect x="139.4" y="490.2" width="3.4" height="1.4" fill="#111" opacity="0.66"/><rect x="143.4" y="490.2" width="3.1" height="1.4" fill="#111" opacity="0.86"/><rect x="147.3" y="490.2" width="4.3" height="1.4" fill="#111" opacity="0.71"/><rect x="152.8" y="490.2" width="5.6" height="1.4" fill="#111" opacity="0.66"/><rect x="159.4" y="490.2" width="6.6" height="1.4" fill="#111" opacity="0.90"/><rect x="166.5" y="490.2" width="5.3" height="1.4" fill="#111" opacity="0.84"/><rect x="172.9" y="490.2" width="8.1" height="1.4" fill="#111" opacity="0.60"/><rect x="181.0" y="490.6" width="26.2" height="0.8" fill="#999" opacity="0.80"/><rect x="100.0" y="492.2" width="107.2" height="2.4" fill="#000" opacity="1.00"/><rect x="100.0" y="494.6" width="107.2" height="15.6" fill="#6a6a6a" opacity="1.00"/><rect x="100.0" y="492.0" width="0.8" height="18.2" fill="#111" opacity="1.00"/><rect x="206.4" y="492.0" width="0.8" height="18.2" fill="#111" opacity="1.00"/><rect x="147.0" y="493.4" width="15.0" height="2.0" fill="#999" opacity="0.90"/><rect x="101.0" y="495.6" width="74.0" height="1.8" fill="#2a2a2a" opacity="0.95"/><rect x="101.5" y="496.1" width="1.3" height="0.8" fill="#f4f4f4" opacity="1.00"/><rect x="104.4" y="496.1" width="1.3" height="0.8" fill="#f4f4f4" opacity="1.00"/><rect x="107.3" y="496.1" width="1.3" height="0.8" fill="#f4f4f4" opacity="1.00"/><rect x="110.2" y="496.1" width="1.3" height="0.8" fill="#f4f4f4" opacity="1.00"/><rect x="113.1" y="496.1" width="1.3" height="0.8" fill="#f4f4f4" opacity="1.00"/><rect x="116.0" y="496.1" width="1.3" height="0.8" fill="#f4f4f4" opacity="1.00"/><rect x="118.9" y="496.1" width="1.3" height="0.8" fill="#f4f4f4" opacity="1.00"/><rect x="121.8" y="496.1" width="1.3" height="0.8" fill="#f4f4f4" opacity="1.00"/><rect x="124.7" y="496.1" width="1.3" height="0.8" fill="#f4f4f4" opacity="1.00"/><rect x="127.6" y="496.1" width="1.3" height="0.8" fill="#f4f4f4" opacity="1.00"/><rect x="130.5" y="496.1" width="1.3" height="0.8" fill="#f4f4f4" opacity="1.00"/><rect x="133.4" y="496.1" width="1.3" height="0.8" fill="#f4f4f4" opacity="1.00"/><rect x="136.3" y="496.1" width="1.3" height="0.8" fill="#f4f4f4" opacity="1.00"/><rect x="139.2" y="496.1" width="1.3" height="0.8" fill="#f4f4f4" opacity="1.00"/><rect x="142.1" y="496.1" width="1.3" height="0.8" fill="#f4f4f4" opacity="1.00"/><rect x="145.0" y="496.1" width="1.3" height="0.8" fill="#f4f4f4" opacity="1.00"/><rect x="147.9" y="496.1" width="1.3" height="0.8" fill="#f4f4f4" opacity="1.00"/><rect x="150.8" y="496.1" width="1.3" height="0.8" fill="#f4f4f4" opacity="1.00"/><rect x="153.7" y="496.1" width="1.3" height="0.8" fill="#f4f4f4" opacity="1.00"/><rect x="156.6" y="496.1" width="1.3" height="0.8" fill="#f4f4f4" opacity="1.00"/><rect x="159.5" y="496.1" width="1.3" height="0.8" fill="#f4f4f4" opacity="1.00"/><rect x="162.4" y="496.1" width="1.3" height="0.8" fill="#f4f4f4" opacity="1.00"/><rect x="165.3" y="496.1" width="1.3" height="0.8" fill="#f4f4f4" opacity="1.00"/><rect x="168.2" y="496.1" width="1.3" height="0.8" fill="#f4f4f4" opacity="1.00"/><rect x="171.1" y="496.1" width="1.3" height="0.8" fill="#f4f4f4" opacity="1.00"/><rect x="101.0" y="498.6" width="74.0" height="1.8" fill="#9c9c9c" opacity="1.00"/><rect x="101.0" y="498.8" width="4.3" height="1.4" fill="#1c1c1c" opacity="0.34"/><rect x="108.2" y="498.8" width="9.4" height="1.4" fill="#1c1c1c" opacity="0.49"/><rect x="119.1" y="498.8" width="12.5" height="1.4" fill="#1c1c1c" opacity="0.39"/><rect x="132.8" y="498.8" width="11.6" height="1.4" fill="#1c1c1c" opacity="0.49"/><rect x="145.1" y="498.8" width="9.6" height="1.4" fill="#1c1c1c" opacity="0.42"/><rect x="155.7" y="498.8" width="7.1" height="1.4" fill="#1c1c1c" opacity="0.33"/><rect x="163.8" y="498.8" width="5.8" height="1.4" fill="#1c1c1c" opacity="0.42"/><rect x="171.7" y="498.8" width="3.3" height="1.4" fill="#1c1c1c" opacity="0.30"/><rect x="101.0" y="501.4" width="67.0" height="1.8" fill="#2a2a2a" opacity="0.95"/><rect x="101.5" y="501.9" width="1.3" height="0.8" fill="#f4f4f4" opacity="1.00"/><rect x="104.2" y="501.9" width="1.3" height="0.8" fill="#f4f4f4" opacity="1.00"/><rect x="106.9" y="501.9" width="1.3" height="0.8" fill="#f4f4f4" opacity="1.00"/><rect x="109.6" y="501.9" width="1.3" height="0.8" fill="#f4f4f4" opacity="1.00"/><rect x="112.3" y="501.9" width="1.3" height="0.8" fill="#f4f4f4" opacity="1.00"/><rect x="115.0" y="501.9" width="1.3" height="0.8" fill="#f4f4f4" opacity="1.00"/><rect x="117.7" y="501.9" width="1.3" height="0.8" fill="#f4f4f4" opacity="1.00"/><rect x="120.4" y="501.9" width="1.3" height="0.8" fill="#f4f4f4" opacity="1.00"/><rect x="123.1" y="501.9" width="1.3" height="0.8" fill="#f4f4f4" opacity="1.00"/><rect x="125.8" y="501.9" width="1.3" height="0.8" fill="#f4f4f4" opacity="1.00"/><rect x="128.5" y="501.9" width="1.3" height="0.8" fill="#f4f4f4" opacity="1.00"/><rect x="131.2" y="501.9" width="1.3" height="0.8" fill="#f4f4f4" opacity="1.00"/><rect x="133.9" y="501.9" width="1.3" height="0.8" fill="#f4f4f4" opacity="1.00"/><rect x="136.6" y="501.9" width="1.3" height="0.8" fill="#f4f4f4" opacity="1.00"/><rect x="139.3" y="501.9" width="1.3" height="0.8" fill="#f4f4f4" opacity="1.00"/><rect x="142.0" y="501.9" width="1.3" height="0.8" fill="#f4f4f4" opacity="1.00"/><rect x="144.7" y="501.9" width="1.3" height="0.8" fill="#f4f4f4" opacity="1.00"/><rect x="147.4" y="501.9" width="1.3" height="0.8" fill="#f4f4f4" opacity="1.00"/><rect x="150.1" y="501.9" width="1.3" height="0.8" fill="#f4f4f4" opacity="1.00"/><rect x="152.8" y="501.9" width="1.3" height="0.8" fill="#f4f4f4" opacity="1.00"/><rect x="155.5" y="501.9" width="1.3" height="0.8" fill="#f4f4f4" opacity="1.00"/><rect x="158.2" y="501.9" width="1.3" height="0.8" fill="#f4f4f4" opacity="1.00"/><rect x="160.9" y="501.9" width="1.3" height="0.8" fill="#f4f4f4" opacity="1.00"/><rect x="163.6" y="501.9" width="1.3" height="0.8" fill="#f4f4f4" opacity="1.00"/><rect x="166.3" y="501.9" width="1.3" height="0.8" fill="#f4f4f4" opacity="1.00"/><rect x="101.0" y="504.4" width="74.0" height="1.6" fill="#b5b5b5" opacity="1.00"/><rect x="101.0" y="503.6" width="6.7" height="1.0" fill="#111" opacity="0.57"/><rect x="108.4" y="503.6" width="1.6" height="1.0" fill="#111" opacity="0.74"/><rect x="101.0" y="507.0" width="74.0" height="1.6" fill="#a8a8a8" opacity="1.00"/><rect x="139.0" y="506.2" width="2.4" height="0.9" fill="#111" opacity="0.48"/><rect x="142.2" y="506.2" width="5.9" height="0.9" fill="#111" opacity="0.61"/><rect x="148.5" y="506.2" width="3.1" height="0.9" fill="#111" opacity="0.63"/><rect x="152.4" y="506.2" width="1.6" height="0.9" fill="#111" opacity="0.53"/><rect x="101.0" y="509.0" width="74.0" height="1.2" fill="#2a2a2a" opacity="0.90"/><rect x="103.0" y="508.8" width="36.0" height="1.0" fill="#ddd" opacity="0.90"/><rect x="141.0" y="508.8" width="33.0" height="1.0" fill="#ccc" opacity="0.90"/><rect x="175.4" y="494.6" width="1.0" height="15.6" fill="#1a1a1a" opacity="1.00"/><rect x="176.4" y="495.4" width="30.0" height="12.2" fill="#c9c9c9" opacity="1.00"/><rect x="179.0" y="496.6" width="1.6" height="1.1" fill="#555" opacity="0.90"/><rect x="182.8" y="496.6" width="1.6" height="1.1" fill="#555" opacity="0.90"/><rect x="186.6" y="496.6" width="1.6" height="1.1" fill="#555" opacity="0.90"/><rect x="190.4" y="496.6" width="1.6" height="1.1" fill="#555" opacity="0.90"/><rect x="194.2" y="496.6" width="1.6" height="1.1" fill="#555" opacity="0.90"/><rect x="198.0" y="496.6" width="1.6" height="1.1" fill="#555" opacity="0.90"/><rect x="201.8" y="496.6" width="1.6" height="1.1" fill="#555" opacity="0.90"/><rect x="179.0" y="500.4" width="2.2" height="1.0" fill="#444" opacity="0.85"/><rect x="182.8" y="500.4" width="2.2" height="1.0" fill="#444" opacity="0.85"/><rect x="186.6" y="500.4" width="2.2" height="1.0" fill="#444" opacity="0.85"/><rect x="190.4" y="500.4" width="2.2" height="1.0" fill="#444" opacity="0.85"/><rect x="194.2" y="500.4" width="2.2" height="1.0" fill="#444" opacity="0.85"/><rect x="198.0" y="500.4" width="2.2" height="1.0" fill="#444" opacity="0.85"/><rect x="201.8" y="500.4" width="2.2" height="1.0" fill="#444" opacity="0.85"/><rect x="180.6" y="502.0" width="2.2" height="1.0" fill="#444" opacity="0.85"/><rect x="184.4" y="502.0" width="2.2" height="1.0" fill="#444" opacity="0.85"/><rect x="188.2" y="502.0" width="2.2" height="1.0" fill="#444" opacity="0.85"/><rect x="192.0" y="502.0" width="2.2" height="1.0" fill="#444" opacity="0.85"/><rect x="195.8" y="502.0" width="2.2" height="1.0" fill="#444" opacity="0.85"/><rect x="199.6" y="502.0" width="2.2" height="1.0" fill="#444" opacity="0.85"/><rect x="203.4" y="502.0" width="2.2" height="1.0" fill="#444" opacity="0.85"/><rect x="178.0" y="505.6" width="4.2" height="1.4" fill="#111" opacity="0.72"/><rect x="182.9" y="505.6" width="4.9" height="1.4" fill="#111" opacity="0.81"/><rect x="189.0" y="505.6" width="4.5" height="1.4" fill="#111" opacity="0.61"/><rect x="194.5" y="505.6" width="3.4" height="1.4" fill="#111" opacity="0.55"/><rect x="199.1" y="505.6" width="0.9" height="1.4" fill="#111" opacity="0.80"/><rect x="176.4" y="507.6" width="30.0" height="0.8" fill="#222" opacity="0.90"/><rect x="100.5" y="510.9" width="8.0" height="1.0" fill="#111" opacity="0.65"/><rect x="144.0" y="510.9" width="2.1" height="1.0" fill="#111" opacity="0.63"/><rect x="147.0" y="510.9" width="8.4" height="1.0" fill="#111" opacity="0.51"/><rect x="156.3" y="510.9" width="4.6" height="1.0" fill="#111" opacity="0.62"/><rect x="161.4" y="510.9" width="2.1" height="1.0" fill="#111" opacity="0.62"/><rect x="197.0" y="510.9" width="2.8" height="1.0" fill="#111" opacity="0.66"/><rect x="200.8" y="510.9" width="6.2" height="1.0" fill="#111" opacity="0.58"/></svg>
<span class="t" style="left:148.37px;top:526.00px;font-size:13.5px;line-height:13.5px;font-weight:400;color:#474d66;">1</span>
<div class="abs" style="left:95.5px;top:557px;width:115.5px;height:138px;border:1px solid #ededed;border-radius:3px;box-sizing:border-box;background:#fff;box-shadow:0 0 3px rgba(0,0,0,.06)"></div>
<svg class="abs" style="left:92px;top:550px;filter:blur(.5px)" width="130" height="150" viewBox="92 550 130 150"><rect x="99.7" y="560.1" width="108.2" height="1.6" fill="#444" opacity="0.95"/><rect x="99.7" y="573.0" width="108.2" height="0.5" fill="#444" opacity="0.90"/><rect x="99.7" y="560.1" width="2.8" height="13.4" fill="#8a8a8a" opacity="0.85"/><rect x="207.0" y="560.1" width="0.9" height="13.4" fill="#555" opacity="0.90"/><rect x="103.5" y="562.0" width="21.6" height="1.2" fill="#1a1a1a" opacity="0.90"/><rect x="99.7" y="574.4" width="108.2" height="1.6" fill="#444" opacity="0.95"/><rect x="99.7" y="589.3" width="108.2" height="0.5" fill="#444" opacity="0.90"/><rect x="99.7" y="574.4" width="2.8" height="15.4" fill="#8a8a8a" opacity="0.85"/><rect x="207.0" y="574.4" width="0.9" height="15.4" fill="#555" opacity="0.90"/><rect x="103.5" y="576.4" width="21.6" height="1.2" fill="#1a1a1a" opacity="0.90"/><rect x="99.7" y="591.0" width="108.2" height="1.6" fill="#444" opacity="0.95"/><rect x="99.7" y="625.4" width="108.2" height="0.5" fill="#444" opacity="0.90"/><rect x="99.7" y="591.0" width="2.8" height="34.9" fill="#8a8a8a" opacity="0.85"/><rect x="207.0" y="591.0" width="0.9" height="34.9" fill="#555" opacity="0.90"/><rect x="103.5" y="592.9" width="21.6" height="1.2" fill="#1a1a1a" opacity="0.90"/><rect x="99.7" y="627.7" width="108.2" height="1.6" fill="#444" opacity="0.95"/><rect x="99.7" y="638.8" width="108.2" height="0.5" fill="#444" opacity="0.90"/><rect x="99.7" y="627.7" width="2.8" height="11.7" fill="#8a8a8a" opacity="0.85"/><rect x="207.0" y="627.7" width="0.9" height="11.7" fill="#555" opacity="0.90"/><rect x="103.5" y="629.6" width="21.6" height="1.2" fill="#1a1a1a" opacity="0.90"/><rect x="99.7" y="640.8" width="108.2" height="1.6" fill="#444" opacity="0.95"/><rect x="99.7" y="652.8" width="108.2" height="0.5" fill="#444" opacity="0.90"/><rect x="99.7" y="640.8" width="2.8" height="12.6" fill="#8a8a8a" opacity="0.85"/><rect x="207.0" y="640.8" width="0.9" height="12.6" fill="#555" opacity="0.90"/><rect x="103.5" y="642.7" width="21.6" height="1.2" fill="#1a1a1a" opacity="0.90"/><rect x="99.7" y="654.4" width="108.2" height="1.6" fill="#444" opacity="0.95"/><rect x="99.7" y="687.3" width="108.2" height="0.5" fill="#444" opacity="0.90"/><rect x="99.7" y="654.4" width="2.8" height="33.5" fill="#8a8a8a" opacity="0.85"/><rect x="207.0" y="654.4" width="0.9" height="33.5" fill="#555" opacity="0.90"/><rect x="103.5" y="656.3" width="21.6" height="1.2" fill="#1a1a1a" opacity="0.90"/><rect x="103.5" y="563.6" width="5.1" height="1.0" fill="#222" opacity="0.61"/><rect x="109.8" y="563.6" width="5.2" height="1.0" fill="#222" opacity="0.60"/><rect x="115.9" y="563.6" width="3.3" height="1.0" fill="#222" opacity="0.60"/><rect x="120.2" y="563.6" width="7.4" height="1.0" fill="#222" opacity="0.51"/><rect x="128.3" y="563.6" width="2.7" height="1.0" fill="#222" opacity="0.66"/><rect x="132.0" y="563.6" width="2.4" height="1.0" fill="#222" opacity="0.70"/><rect x="135.5" y="563.6" width="6.4" height="1.0" fill="#222" opacity="0.62"/><rect x="142.6" y="563.6" width="2.2" height="1.0" fill="#222" opacity="0.60"/><rect x="145.4" y="563.6" width="3.4" height="1.0" fill="#222" opacity="0.54"/><rect x="149.3" y="563.6" width="5.2" height="1.0" fill="#222" opacity="0.58"/><rect x="155.5" y="563.6" width="5.5" height="1.0" fill="#222" opacity="0.62"/><rect x="162.0" y="563.6" width="6.5" height="1.0" fill="#222" opacity="0.59"/><rect x="169.2" y="563.6" width="8.7" height="1.0" fill="#222" opacity="0.70"/><rect x="179.0" y="563.6" width="6.8" height="1.0" fill="#222" opacity="0.56"/><rect x="186.5" y="563.6" width="4.0" height="1.0" fill="#222" opacity="0.50"/><rect x="191.5" y="563.6" width="3.4" height="1.0" fill="#222" opacity="0.67"/><rect x="103.5" y="565.7" width="8.4" height="1.0" fill="#222" opacity="0.67"/><rect x="112.5" y="565.7" width="3.5" height="1.0" fill="#222" opacity="0.68"/><rect x="116.8" y="565.7" width="8.6" height="1.0" fill="#222" opacity="0.57"/><rect x="126.0" y="565.7" width="6.3" height="1.0" fill="#222" opacity="0.65"/><rect x="133.0" y="565.7" width="2.7" height="1.0" fill="#222" opacity="0.56"/><rect x="136.8" y="565.7" width="7.1" height="1.0" fill="#222" opacity="0.51"/><rect x="144.7" y="565.7" width="2.8" height="1.0" fill="#222" opacity="0.50"/><rect x="148.5" y="565.7" width="3.3" height="1.0" fill="#222" opacity="0.61"/><rect x="152.6" y="565.7" width="3.4" height="1.0" fill="#222" opacity="0.64"/><rect x="156.6" y="565.7" width="6.4" height="1.0" fill="#222" opacity="0.51"/><rect x="163.8" y="565.7" width="3.5" height="1.0" fill="#222" opacity="0.55"/><rect x="168.5" y="565.7" width="7.4" height="1.0" fill="#222" opacity="0.55"/><rect x="177.0" y="565.7" width="3.5" height="1.0" fill="#222" opacity="0.57"/><rect x="181.7" y="565.7" width="6.4" height="1.0" fill="#222" opacity="0.51"/><rect x="189.2" y="565.7" width="3.5" height="1.0" fill="#222" opacity="0.54"/><rect x="193.8" y="565.7" width="1.2" height="1.0" fill="#222" opacity="0.55"/><rect x="103.5" y="567.8" width="2.7" height="1.0" fill="#222" opacity="0.61"/><rect x="106.9" y="567.8" width="6.1" height="1.0" fill="#222" opacity="0.57"/><rect x="113.8" y="567.8" width="8.5" height="1.0" fill="#222" opacity="0.59"/><rect x="123.2" y="567.8" width="7.8" height="1.0" fill="#222" opacity="0.53"/><rect x="131.7" y="567.8" width="8.1" height="1.0" fill="#222" opacity="0.66"/><rect x="140.5" y="567.8" width="3.4" height="1.0" fill="#222" opacity="0.65"/><rect x="145.0" y="567.8" width="3.4" height="1.0" fill="#222" opacity="0.69"/><rect x="149.6" y="567.8" width="6.1" height="1.0" fill="#222" opacity="0.58"/><rect x="156.3" y="567.8" width="2.4" height="1.0" fill="#222" opacity="0.69"/><rect x="159.3" y="567.8" width="6.8" height="1.0" fill="#222" opacity="0.54"/><rect x="167.2" y="567.8" width="6.0" height="1.0" fill="#222" opacity="0.55"/><rect x="173.9" y="567.8" width="6.9" height="1.0" fill="#222" opacity="0.50"/><rect x="181.4" y="567.8" width="5.8" height="1.0" fill="#222" opacity="0.67"/><rect x="188.2" y="567.8" width="4.0" height="1.0" fill="#222" opacity="0.68"/><rect x="192.8" y="567.8" width="2.2" height="1.0" fill="#222" opacity="0.55"/><rect x="103.5" y="569.9" width="2.5" height="1.0" fill="#222" opacity="0.53"/><rect x="106.8" y="569.9" width="5.9" height="1.0" fill="#222" opacity="0.52"/><rect x="113.5" y="569.9" width="8.0" height="1.0" fill="#222" opacity="0.70"/><rect x="122.4" y="569.9" width="6.7" height="1.0" fill="#222" opacity="0.61"/><rect x="129.7" y="569.9" width="2.3" height="1.0" fill="#222" opacity="0.49"/><rect x="133.2" y="569.9" width="6.7" height="1.0" fill="#222" opacity="0.69"/><rect x="140.5" y="569.9" width="6.3" height="1.0" fill="#222" opacity="0.59"/><rect x="147.9" y="569.9" width="4.2" height="1.0" fill="#222" opacity="0.70"/><rect x="152.6" y="569.9" width="5.7" height="1.0" fill="#222" opacity="0.64"/><rect x="159.5" y="569.9" width="7.0" height="1.0" fill="#222" opacity="0.64"/><rect x="167.6" y="569.9" width="8.2" height="1.0" fill="#222" opacity="0.56"/><rect x="176.7" y="569.9" width="8.1" height="1.0" fill="#222" opacity="0.67"/><rect x="185.6" y="569.9" width="7.3" height="1.0" fill="#222" opacity="0.67"/><rect x="193.9" y="569.9" width="1.1" height="1.0" fill="#222" opacity="0.57"/><rect x="103.5" y="571.6" width="6.1" height="1.0" fill="#222" opacity="0.51"/><rect x="110.6" y="571.6" width="8.7" height="1.0" fill="#222" opacity="0.67"/><rect x="120.3" y="571.6" width="4.7" height="1.0" fill="#222" opacity="0.64"/><rect x="125.9" y="571.6" width="5.0" height="1.0" fill="#222" opacity="0.67"/><rect x="131.5" y="571.6" width="3.2" height="1.0" fill="#222" opacity="0.50"/><rect x="196.0" y="563.3" width="3.5" height="1.0" fill="#555" opacity="0.50"/><rect x="201.9" y="563.3" width="5.2" height="1.0" fill="#555" opacity="0.50"/><rect x="196.0" y="565.7" width="3.5" height="1.0" fill="#555" opacity="0.50"/><rect x="201.9" y="565.7" width="5.2" height="1.0" fill="#555" opacity="0.50"/><rect x="103.5" y="579.0" width="5.3" height="1.0" fill="#222" opacity="0.54"/><rect x="109.8" y="579.0" width="5.4" height="1.0" fill="#222" opacity="0.62"/><rect x="116.4" y="579.0" width="3.8" height="1.0" fill="#222" opacity="0.49"/><rect x="120.9" y="579.0" width="6.6" height="1.0" fill="#222" opacity="0.53"/><rect x="128.1" y="579.0" width="8.1" height="1.0" fill="#222" opacity="0.63"/><rect x="137.1" y="579.0" width="8.0" height="1.0" fill="#222" opacity="0.56"/><rect x="146.1" y="579.0" width="3.4" height="1.0" fill="#222" opacity="0.58"/><rect x="150.6" y="579.0" width="8.2" height="1.0" fill="#222" opacity="0.67"/><rect x="159.5" y="579.0" width="6.0" height="1.0" fill="#222" opacity="0.56"/><rect x="166.1" y="579.0" width="5.4" height="1.0" fill="#222" opacity="0.67"/><rect x="172.6" y="579.0" width="6.8" height="1.0" fill="#222" opacity="0.69"/><rect x="180.1" y="579.0" width="3.2" height="1.0" fill="#222" opacity="0.58"/><rect x="184.0" y="579.0" width="3.5" height="1.0" fill="#222" opacity="0.58"/><rect x="188.5" y="579.0" width="5.4" height="1.0" fill="#222" opacity="0.56"/><rect x="103.5" y="581.1" width="8.6" height="1.0" fill="#222" opacity="0.59"/><rect x="112.7" y="581.1" width="2.3" height="1.0" fill="#222" opacity="0.67"/><rect x="115.6" y="581.1" width="6.8" height="1.0" fill="#222" opacity="0.61"/><rect x="123.1" y="581.1" width="7.3" height="1.0" fill="#222" opacity="0.49"/><rect x="131.1" y="581.1" width="5.1" height="1.0" fill="#222" opacity="0.50"/><rect x="137.3" y="581.1" width="3.7" height="1.0" fill="#222" opacity="0.52"/><rect x="141.5" y="581.1" width="6.3" height="1.0" fill="#222" opacity="0.58"/><rect x="148.7" y="581.1" width="6.4" height="1.0" fill="#222" opacity="0.66"/><rect x="156.4" y="581.1" width="6.6" height="1.0" fill="#222" opacity="0.53"/><rect x="163.8" y="581.1" width="3.3" height="1.0" fill="#222" opacity="0.49"/><rect x="168.0" y="581.1" width="6.8" height="1.0" fill="#222" opacity="0.53"/><rect x="175.5" y="581.1" width="4.4" height="1.0" fill="#222" opacity="0.64"/><rect x="180.8" y="581.1" width="6.2" height="1.0" fill="#222" opacity="0.65"/><rect x="187.8" y="581.1" width="7.2" height="1.0" fill="#222" opacity="0.68"/><rect x="103.5" y="583.2" width="8.3" height="1.0" fill="#222" opacity="0.64"/><rect x="112.4" y="583.2" width="5.1" height="1.0" fill="#222" opacity="0.62"/><rect x="118.7" y="583.2" width="4.6" height="1.0" fill="#222" opacity="0.61"/><rect x="124.4" y="583.2" width="7.4" height="1.0" fill="#222" opacity="0.69"/><rect x="132.6" y="583.2" width="4.7" height="1.0" fill="#222" opacity="0.53"/><rect x="196.0" y="577.9" width="3.5" height="1.0" fill="#555" opacity="0.50"/><rect x="201.9" y="577.9" width="5.2" height="1.0" fill="#555" opacity="0.50"/><rect x="103.5" y="586.1" width="90.6" height="0.7" fill="#666" opacity="0.80"/><rect x="103.5" y="587.9" width="90.6" height="0.7" fill="#666" opacity="0.80"/><rect x="103.5" y="595.7" width="7.5" height="1.4" fill="#222" opacity="0.76"/><rect x="112.1" y="595.7" width="3.5" height="1.4" fill="#222" opacity="0.82"/><rect x="116.8" y="595.7" width="8.6" height="1.4" fill="#222" opacity="0.73"/><rect x="126.4" y="595.7" width="4.2" height="1.4" fill="#222" opacity="0.83"/><rect x="131.8" y="595.7" width="4.4" height="1.4" fill="#222" opacity="0.62"/><rect x="137.0" y="595.7" width="5.7" height="1.4" fill="#222" opacity="0.79"/><rect x="143.6" y="595.7" width="2.3" height="1.4" fill="#222" opacity="0.80"/><rect x="146.5" y="595.7" width="7.4" height="1.4" fill="#222" opacity="0.64"/><rect x="154.6" y="595.7" width="7.3" height="1.4" fill="#222" opacity="0.63"/><rect x="162.6" y="595.7" width="5.5" height="1.4" fill="#222" opacity="0.78"/><rect x="169.2" y="595.7" width="6.7" height="1.4" fill="#222" opacity="0.84"/><rect x="176.7" y="595.7" width="8.4" height="1.4" fill="#222" opacity="0.62"/><rect x="185.8" y="595.7" width="5.6" height="1.4" fill="#222" opacity="0.67"/><rect x="192.4" y="595.7" width="6.3" height="1.4" fill="#222" opacity="0.73"/><rect x="199.9" y="595.7" width="5.8" height="1.4" fill="#222" opacity="0.67"/><rect x="206.5" y="595.7" width="0.7" height="1.4" fill="#222" opacity="0.82"/><rect x="103.5" y="598.2" width="7.7" height="1.2" fill="#222" opacity="0.79"/><rect x="112.1" y="598.2" width="5.9" height="1.2" fill="#222" opacity="0.61"/><rect x="118.9" y="598.2" width="5.4" height="1.2" fill="#222" opacity="0.71"/><rect x="124.9" y="598.2" width="8.5" height="1.2" fill="#222" opacity="0.68"/><rect x="134.2" y="598.2" width="7.4" height="1.2" fill="#222" opacity="0.70"/><rect x="142.5" y="598.2" width="6.7" height="1.2" fill="#222" opacity="0.58"/><rect x="150.1" y="598.2" width="4.8" height="1.2" fill="#222" opacity="0.79"/><rect x="156.1" y="598.2" width="2.2" height="1.2" fill="#222" opacity="0.67"/><rect x="103.5" y="601.5" width="5.0" height="0.9" fill="#222" opacity="0.47"/><rect x="109.6" y="601.5" width="1.6" height="0.9" fill="#222" opacity="0.40"/><rect x="102.8" y="603.8" width="3.0" height="3.0" fill="#333" opacity="0.90"/><rect x="103.5" y="604.5" width="1.6" height="1.6" fill="#bbb" opacity="0.90"/><rect x="107.0" y="604.1" width="2.3" height="1.0" fill="#222" opacity="0.58"/><rect x="110.3" y="604.1" width="8.6" height="1.0" fill="#222" opacity="0.53"/><rect x="119.5" y="604.1" width="2.2" height="1.0" fill="#222" opacity="0.59"/><rect x="122.7" y="604.1" width="3.7" height="1.0" fill="#222" opacity="0.64"/><rect x="127.3" y="604.1" width="6.0" height="1.0" fill="#222" opacity="0.72"/><rect x="134.2" y="604.1" width="2.3" height="1.0" fill="#222" opacity="0.68"/><rect x="107.0" y="605.8" width="4.8" height="1.0" fill="#222" opacity="0.60"/><rect x="112.5" y="605.8" width="3.4" height="1.0" fill="#222" opacity="0.62"/><rect x="116.9" y="605.8" width="5.6" height="1.0" fill="#222" opacity="0.67"/><rect x="123.5" y="605.8" width="7.8" height="1.0" fill="#222" opacity="0.54"/><rect x="102.8" y="609.7" width="3.0" height="3.0" fill="#333" opacity="0.90"/><rect x="103.5" y="610.4" width="1.6" height="1.6" fill="#bbb" opacity="0.90"/><rect x="107.0" y="610.0" width="8.1" height="1.0" fill="#222" opacity="0.60"/><rect x="115.8" y="610.0" width="8.2" height="1.0" fill="#222" opacity="0.57"/><rect x="125.3" y="610.0" width="5.1" height="1.0" fill="#222" opacity="0.56"/><rect x="102.8" y="617.4" width="3.0" height="3.0" fill="#333" opacity="0.90"/><rect x="103.5" y="618.1" width="1.6" height="1.6" fill="#bbb" opacity="0.90"/><rect x="107.0" y="617.7" width="4.7" height="1.0" fill="#222" opacity="0.62"/><rect x="112.9" y="617.7" width="5.7" height="1.0" fill="#222" opacity="0.68"/><rect x="119.2" y="617.7" width="6.3" height="1.0" fill="#222" opacity="0.70"/><rect x="126.1" y="617.7" width="2.4" height="1.0" fill="#222" opacity="0.61"/><rect x="107.0" y="619.5" width="5.4" height="1.0" fill="#222" opacity="0.65"/><rect x="113.3" y="619.5" width="6.6" height="1.0" fill="#222" opacity="0.53"/><rect x="120.5" y="619.5" width="2.8" height="1.0" fill="#222" opacity="0.50"/><rect x="124.3" y="619.5" width="5.5" height="1.0" fill="#222" opacity="0.61"/><rect x="130.4" y="619.5" width="2.8" height="1.0" fill="#222" opacity="0.53"/><rect x="102.8" y="620.9" width="3.0" height="3.0" fill="#333" opacity="0.90"/><rect x="103.5" y="621.6" width="1.6" height="1.6" fill="#bbb" opacity="0.90"/><rect x="107.0" y="621.2" width="8.2" height="1.0" fill="#222" opacity="0.55"/><rect x="115.8" y="621.2" width="8.4" height="1.0" fill="#222" opacity="0.63"/><rect x="125.3" y="621.2" width="3.7" height="1.0" fill="#222" opacity="0.63"/><rect x="107.0" y="622.9" width="4.6" height="1.0" fill="#222" opacity="0.62"/><rect x="112.1" y="622.9" width="3.4" height="1.0" fill="#222" opacity="0.58"/><rect x="116.3" y="622.9" width="4.5" height="1.0" fill="#222" opacity="0.68"/><rect x="121.8" y="622.9" width="2.7" height="1.0" fill="#222" opacity="0.66"/><rect x="125.3" y="622.9" width="2.7" height="1.0" fill="#222" opacity="0.67"/><rect x="129.1" y="622.9" width="1.7" height="1.0" fill="#222" opacity="0.69"/><rect x="141.2" y="603.8" width="3.0" height="3.0" fill="#333" opacity="0.90"/><rect x="141.9" y="604.5" width="1.6" height="1.6" fill="#bbb" opacity="0.90"/><rect x="145.4" y="604.1" width="5.4" height="1.0" fill="#222" opacity="0.75"/><rect x="151.9" y="604.1" width="3.8" height="1.0" fill="#222" opacity="0.73"/><rect x="156.8" y="604.1" width="7.3" height="1.0" fill="#222" opacity="0.71"/><rect x="164.8" y="604.1" width="0.5" height="1.0" fill="#222" opacity="0.72"/><rect x="141.2" y="609.7" width="3.0" height="3.0" fill="#333" opacity="0.90"/><rect x="141.9" y="610.4" width="1.6" height="1.6" fill="#bbb" opacity="0.90"/><rect x="145.4" y="610.0" width="3.3" height="1.0" fill="#222" opacity="0.57"/><rect x="149.4" y="610.0" width="7.4" height="1.0" fill="#222" opacity="0.59"/><rect x="157.3" y="610.0" width="8.0" height="1.0" fill="#222" opacity="0.75"/><rect x="166.5" y="610.0" width="2.4" height="1.0" fill="#222" opacity="0.59"/><rect x="170.1" y="610.0" width="4.1" height="1.0" fill="#222" opacity="0.57"/><rect x="175.0" y="610.0" width="3.1" height="1.0" fill="#222" opacity="0.54"/><rect x="145.4" y="611.8" width="6.7" height="1.0" fill="#222" opacity="0.65"/><rect x="153.4" y="611.8" width="2.2" height="1.0" fill="#222" opacity="0.62"/><rect x="156.6" y="611.8" width="3.8" height="1.0" fill="#222" opacity="0.57"/><rect x="141.2" y="615.6" width="3.0" height="3.0" fill="#333" opacity="0.90"/><rect x="141.9" y="616.3" width="1.6" height="1.6" fill="#bbb" opacity="0.90"/><rect x="145.4" y="616.0" width="6.4" height="1.0" fill="#222" opacity="0.53"/><rect x="152.5" y="616.0" width="3.9" height="1.0" fill="#222" opacity="0.60"/><rect x="157.3" y="616.0" width="4.9" height="1.0" fill="#222" opacity="0.64"/><rect x="163.3" y="616.0" width="2.2" height="1.0" fill="#222" opacity="0.62"/><rect x="145.4" y="617.7" width="7.1" height="1.0" fill="#222" opacity="0.50"/><rect x="153.7" y="617.7" width="3.2" height="1.0" fill="#222" opacity="0.59"/><rect x="157.5" y="617.7" width="5.4" height="1.0" fill="#222" opacity="0.62"/><rect x="163.4" y="617.7" width="7.3" height="1.0" fill="#222" opacity="0.58"/><rect x="141.2" y="620.9" width="3.0" height="3.0" fill="#333" opacity="0.90"/><rect x="141.9" y="621.6" width="1.6" height="1.6" fill="#bbb" opacity="0.90"/><rect x="145.4" y="621.2" width="4.2" height="1.0" fill="#222" opacity="0.64"/><rect x="150.4" y="621.2" width="3.9" height="1.0" fill="#222" opacity="0.73"/><rect x="155.3" y="621.2" width="7.1" height="1.0" fill="#222" opacity="0.53"/><rect x="163.4" y="621.2" width="6.0" height="1.0" fill="#222" opacity="0.67"/><rect x="170.2" y="621.2" width="4.2" height="1.0" fill="#222" opacity="0.54"/><rect x="145.4" y="622.9" width="8.7" height="1.0" fill="#222" opacity="0.69"/><rect x="154.6" y="622.9" width="8.1" height="1.0" fill="#222" opacity="0.58"/><rect x="163.6" y="622.9" width="5.2" height="1.0" fill="#222" opacity="0.54"/><rect x="169.1" y="603.8" width="3.0" height="3.0" fill="#333" opacity="0.90"/><rect x="169.8" y="604.5" width="1.6" height="1.6" fill="#bbb" opacity="0.90"/><rect x="173.3" y="604.1" width="8.1" height="1.0" fill="#222" opacity="0.56"/><rect x="182.6" y="604.1" width="3.7" height="1.0" fill="#222" opacity="0.68"/><rect x="186.9" y="604.1" width="4.9" height="1.0" fill="#222" opacity="0.55"/><rect x="192.9" y="604.1" width="4.5" height="1.0" fill="#222" opacity="0.56"/><rect x="198.1" y="604.1" width="3.0" height="1.0" fill="#222" opacity="0.62"/><rect x="202.1" y="604.1" width="3.0" height="1.0" fill="#222" opacity="0.68"/><rect x="169.1" y="609.7" width="3.0" height="3.0" fill="#333" opacity="0.90"/><rect x="169.8" y="610.4" width="1.6" height="1.6" fill="#bbb" opacity="0.90"/><rect x="173.3" y="610.0" width="8.4" height="1.0" fill="#222" opacity="0.69"/><rect x="182.4" y="610.0" width="2.8" height="1.0" fill="#222" opacity="0.73"/><rect x="186.3" y="610.0" width="5.7" height="1.0" fill="#222" opacity="0.61"/><rect x="169.1" y="615.6" width="3.0" height="3.0" fill="#333" opacity="0.90"/><rect x="169.8" y="616.3" width="1.6" height="1.6" fill="#bbb" opacity="0.90"/><rect x="173.3" y="616.0" width="6.7" height="1.0" fill="#222" opacity="0.57"/><rect x="180.8" y="616.0" width="3.7" height="1.0" fill="#222" opacity="0.74"/><rect x="185.3" y="616.0" width="6.4" height="1.0" fill="#222" opacity="0.57"/><rect x="192.8" y="616.0" width="6.3" height="1.0" fill="#222" opacity="0.53"/><rect x="199.7" y="616.0" width="1.9" height="1.0" fill="#222" opacity="0.53"/><rect x="173.3" y="617.7" width="8.1" height="1.0" fill="#222" opacity="0.52"/><rect x="182.2" y="617.7" width="3.6" height="1.0" fill="#222" opacity="0.59"/><rect x="169.1" y="620.9" width="3.0" height="3.0" fill="#333" opacity="0.90"/><rect x="169.8" y="621.6" width="1.6" height="1.6" fill="#bbb" opacity="0.90"/><rect x="173.3" y="621.2" width="4.4" height="1.0" fill="#222" opacity="0.69"/><rect x="178.8" y="621.2" width="2.6" height="1.0" fill="#222" opacity="0.55"/><rect x="182.5" y="621.2" width="6.2" height="1.0" fill="#222" opacity="0.70"/><rect x="189.4" y="621.2" width="4.9" height="1.0" fill="#222" opacity="0.58"/><rect x="195.4" y="621.2" width="1.2" height="1.0" fill="#222" opacity="0.67"/><rect x="173.3" y="622.9" width="7.1" height="1.0" fill="#222" opacity="0.66"/><rect x="181.1" y="622.9" width="6.4" height="1.0" fill="#222" opacity="0.61"/><rect x="188.4" y="622.9" width="4.2" height="1.0" fill="#222" opacity="0.60"/><rect x="193.5" y="622.9" width="2.6" height="1.0" fill="#222" opacity="0.66"/><rect x="102.8" y="631.7" width="2.8" height="2.6" fill="#333" opacity="0.90"/><rect x="103.5" y="632.4" width="1.4" height="1.2" fill="#aaa" opacity="0.90"/><rect x="106.7" y="632.2" width="2.6" height="1.0" fill="#222" opacity="0.60"/><rect x="110.2" y="632.2" width="2.6" height="1.0" fill="#222" opacity="0.62"/><rect x="113.9" y="632.2" width="6.7" height="1.0" fill="#222" opacity="0.61"/><rect x="121.2" y="632.2" width="4.5" height="1.0" fill="#222" opacity="0.72"/><rect x="126.5" y="632.2" width="2.9" height="1.0" fill="#222" opacity="0.71"/><rect x="130.3" y="632.2" width="8.2" height="1.0" fill="#222" opacity="0.77"/><rect x="139.6" y="632.2" width="5.0" height="1.0" fill="#222" opacity="0.73"/><rect x="145.4" y="632.2" width="4.2" height="1.0" fill="#222" opacity="0.64"/><rect x="102.8" y="635.9" width="2.8" height="2.6" fill="#333" opacity="0.90"/><rect x="103.5" y="636.6" width="1.4" height="1.2" fill="#aaa" opacity="0.90"/><rect x="106.7" y="636.4" width="3.7" height="1.0" fill="#222" opacity="0.63"/><rect x="111.2" y="636.4" width="4.5" height="1.0" fill="#222" opacity="0.64"/><rect x="116.5" y="636.4" width="3.4" height="1.0" fill="#222" opacity="0.68"/><rect x="120.9" y="636.4" width="5.7" height="1.0" fill="#222" opacity="0.74"/><rect x="127.5" y="636.4" width="3.3" height="1.0" fill="#222" opacity="0.72"/><rect x="131.9" y="636.4" width="4.0" height="1.0" fill="#222" opacity="0.55"/><rect x="136.8" y="636.4" width="5.7" height="1.0" fill="#222" opacity="0.68"/><rect x="143.7" y="636.4" width="6.4" height="1.0" fill="#222" opacity="0.73"/><rect x="150.7" y="636.4" width="5.7" height="1.0" fill="#222" opacity="0.73"/><rect x="157.0" y="636.4" width="2.6" height="1.0" fill="#222" opacity="0.72"/><rect x="160.8" y="636.4" width="0.3" height="1.0" fill="#222" opacity="0.69"/><rect x="102.8" y="644.6" width="2.8" height="2.6" fill="#333" opacity="0.90"/><rect x="103.5" y="645.3" width="1.4" height="1.2" fill="#aaa" opacity="0.90"/><rect x="106.7" y="645.1" width="4.9" height="1.0" fill="#222" opacity="0.71"/><rect x="112.4" y="645.1" width="8.1" height="1.0" fill="#222" opacity="0.63"/><rect x="121.4" y="645.1" width="4.4" height="1.0" fill="#222" opacity="0.73"/><rect x="126.6" y="645.1" width="3.0" height="1.0" fill="#222" opacity="0.66"/><rect x="130.6" y="645.1" width="2.6" height="1.0" fill="#222" opacity="0.69"/><rect x="133.8" y="645.1" width="7.1" height="1.0" fill="#222" opacity="0.78"/><rect x="141.6" y="645.1" width="2.1" height="1.0" fill="#222" opacity="0.63"/><rect x="144.4" y="645.1" width="5.2" height="1.0" fill="#222" opacity="0.67"/><rect x="150.1" y="645.1" width="4.5" height="1.0" fill="#222" opacity="0.55"/><rect x="155.2" y="645.1" width="8.2" height="1.0" fill="#222" opacity="0.76"/><rect x="102.8" y="648.8" width="2.8" height="2.6" fill="#333" opacity="0.90"/><rect x="103.5" y="649.5" width="1.4" height="1.2" fill="#aaa" opacity="0.90"/><rect x="106.7" y="649.3" width="8.7" height="1.0" fill="#222" opacity="0.63"/><rect x="116.0" y="649.3" width="3.4" height="1.0" fill="#222" opacity="0.65"/><rect x="120.1" y="649.3" width="8.5" height="1.0" fill="#222" opacity="0.56"/><rect x="129.4" y="649.3" width="2.9" height="1.0" fill="#222" opacity="0.70"/><rect x="133.3" y="649.3" width="3.3" height="1.0" fill="#222" opacity="0.56"/><rect x="137.5" y="649.3" width="6.0" height="1.0" fill="#222" opacity="0.76"/><rect x="144.0" y="649.3" width="2.8" height="1.0" fill="#222" opacity="0.59"/><rect x="147.5" y="649.3" width="3.7" height="1.0" fill="#222" opacity="0.71"/><rect x="152.1" y="649.3" width="1.0" height="1.0" fill="#222" opacity="0.59"/><rect x="165.3" y="631.0" width="2.8" height="2.6" fill="#333" opacity="0.90"/><rect x="166.0" y="631.7" width="1.4" height="1.2" fill="#aaa" opacity="0.90"/><rect x="169.1" y="631.3" width="3.2" height="1.0" fill="#222" opacity="0.65"/><rect x="173.1" y="631.3" width="5.7" height="1.0" fill="#222" opacity="0.66"/><rect x="179.7" y="631.3" width="3.8" height="1.0" fill="#222" opacity="0.68"/><rect x="184.7" y="631.3" width="4.4" height="1.0" fill="#222" opacity="0.60"/><rect x="190.2" y="631.3" width="5.3" height="1.0" fill="#222" opacity="0.54"/><rect x="196.1" y="631.3" width="8.4" height="1.0" fill="#222" opacity="0.66"/><rect x="205.3" y="631.3" width="1.9" height="1.0" fill="#222" opacity="0.60"/><rect x="169.1" y="633.1" width="8.7" height="1.0" fill="#222" opacity="0.63"/><rect x="178.5" y="633.1" width="2.2" height="1.0" fill="#222" opacity="0.59"/><rect x="181.4" y="633.1" width="7.4" height="1.0" fill="#222" opacity="0.64"/><rect x="189.8" y="633.1" width="3.1" height="1.0" fill="#222" opacity="0.52"/><rect x="193.6" y="633.1" width="3.8" height="1.0" fill="#222" opacity="0.67"/><rect x="198.3" y="633.1" width="5.3" height="1.0" fill="#222" opacity="0.70"/><rect x="165.3" y="644.6" width="2.8" height="2.6" fill="#333" opacity="0.90"/><rect x="166.0" y="645.3" width="1.4" height="1.2" fill="#aaa" opacity="0.90"/><rect x="169.1" y="644.9" width="5.6" height="1.0" fill="#222" opacity="0.52"/><rect x="175.8" y="644.9" width="2.1" height="1.0" fill="#222" opacity="0.66"/><rect x="179.1" y="644.9" width="7.5" height="1.0" fill="#222" opacity="0.51"/><rect x="187.3" y="644.9" width="6.8" height="1.0" fill="#222" opacity="0.51"/><rect x="195.0" y="644.9" width="5.2" height="1.0" fill="#222" opacity="0.69"/><rect x="201.2" y="644.9" width="6.0" height="1.0" fill="#222" opacity="0.55"/><rect x="169.1" y="646.7" width="4.9" height="1.0" fill="#222" opacity="0.68"/><rect x="174.6" y="646.7" width="7.6" height="1.0" fill="#222" opacity="0.53"/><rect x="183.1" y="646.7" width="5.6" height="1.0" fill="#222" opacity="0.52"/><rect x="189.7" y="646.7" width="4.2" height="1.0" fill="#222" opacity="0.56"/><rect x="194.5" y="646.7" width="4.1" height="1.0" fill="#222" opacity="0.59"/><rect x="199.6" y="646.7" width="4.1" height="1.0" fill="#222" opacity="0.63"/><rect x="168.8" y="636.2" width="38.4" height="0.5" fill="#666" opacity="0.70"/><rect x="103.5" y="658.6" width="4.7" height="1.2" fill="#222" opacity="0.74"/><rect x="109.4" y="658.6" width="7.6" height="1.2" fill="#222" opacity="0.79"/><rect x="117.6" y="658.6" width="4.6" height="1.2" fill="#222" opacity="0.80"/><rect x="122.8" y="658.6" width="5.8" height="1.2" fill="#222" opacity="0.74"/><rect x="129.2" y="658.6" width="8.7" height="1.2" fill="#222" opacity="0.83"/><rect x="138.5" y="658.6" width="6.2" height="1.2" fill="#222" opacity="0.69"/><rect x="145.5" y="658.6" width="5.7" height="1.2" fill="#222" opacity="0.69"/><rect x="151.9" y="658.6" width="4.7" height="1.2" fill="#222" opacity="0.79"/><rect x="157.3" y="658.6" width="3.4" height="1.2" fill="#222" opacity="0.81"/><rect x="161.5" y="658.6" width="8.4" height="1.2" fill="#222" opacity="0.76"/><rect x="170.9" y="658.6" width="4.3" height="1.2" fill="#222" opacity="0.83"/><rect x="175.8" y="658.6" width="3.0" height="1.2" fill="#222" opacity="0.64"/><rect x="179.8" y="658.6" width="6.8" height="1.2" fill="#222" opacity="0.66"/><rect x="187.4" y="658.6" width="7.6" height="1.2" fill="#222" opacity="0.77"/><rect x="195.6" y="658.6" width="3.6" height="1.2" fill="#222" opacity="0.66"/><rect x="199.8" y="658.6" width="4.8" height="1.2" fill="#222" opacity="0.64"/><rect x="205.8" y="658.6" width="1.4" height="1.2" fill="#222" opacity="0.75"/><rect x="103.5" y="660.6" width="7.2" height="1.2" fill="#222" opacity="0.83"/><rect x="111.5" y="660.6" width="4.3" height="1.2" fill="#222" opacity="0.72"/><rect x="116.3" y="660.6" width="4.8" height="1.2" fill="#222" opacity="0.80"/><rect x="122.3" y="660.6" width="7.3" height="1.2" fill="#222" opacity="0.79"/><rect x="130.6" y="660.6" width="2.2" height="1.2" fill="#222" opacity="0.70"/><rect x="133.5" y="660.6" width="6.4" height="1.2" fill="#222" opacity="0.64"/><rect x="140.7" y="660.6" width="5.5" height="1.2" fill="#222" opacity="0.82"/><rect x="147.3" y="660.6" width="6.1" height="1.2" fill="#222" opacity="0.66"/><rect x="154.5" y="660.6" width="8.1" height="1.2" fill="#222" opacity="0.76"/><rect x="163.4" y="660.6" width="5.4" height="1.2" fill="#222" opacity="0.65"/><rect x="169.8" y="660.6" width="8.6" height="1.2" fill="#222" opacity="0.75"/><rect x="179.5" y="660.6" width="7.6" height="1.2" fill="#222" opacity="0.67"/><rect x="188.3" y="660.6" width="6.3" height="1.2" fill="#222" opacity="0.67"/><rect x="195.1" y="660.6" width="3.7" height="1.2" fill="#222" opacity="0.77"/><rect x="199.8" y="660.6" width="4.3" height="1.2" fill="#222" opacity="0.86"/><rect x="204.9" y="660.6" width="2.3" height="1.2" fill="#222" opacity="0.65"/><rect x="103.5" y="662.7" width="3.0" height="1.2" fill="#222" opacity="0.85"/><rect x="107.4" y="662.7" width="5.8" height="1.2" fill="#222" opacity="0.76"/><rect x="113.9" y="662.7" width="8.1" height="1.2" fill="#222" opacity="0.88"/><rect x="123.2" y="662.7" width="6.1" height="1.2" fill="#222" opacity="0.65"/><rect x="130.3" y="662.7" width="4.0" height="1.2" fill="#222" opacity="0.85"/><rect x="135.0" y="662.7" width="5.9" height="1.2" fill="#222" opacity="0.84"/><rect x="141.6" y="662.7" width="5.7" height="1.2" fill="#222" opacity="0.64"/><rect x="147.9" y="662.7" width="3.3" height="1.2" fill="#222" opacity="0.88"/><rect x="152.3" y="662.7" width="6.5" height="1.2" fill="#222" opacity="0.70"/><rect x="159.8" y="662.7" width="7.0" height="1.2" fill="#222" opacity="0.72"/><rect x="167.7" y="662.7" width="7.4" height="1.2" fill="#222" opacity="0.62"/><rect x="175.8" y="662.7" width="5.2" height="1.2" fill="#222" opacity="0.65"/><rect x="181.8" y="662.7" width="5.9" height="1.2" fill="#222" opacity="0.66"/><rect x="188.5" y="662.7" width="3.8" height="1.2" fill="#222" opacity="0.77"/><rect x="193.1" y="662.7" width="6.3" height="1.2" fill="#222" opacity="0.63"/><rect x="200.5" y="662.7" width="3.1" height="1.2" fill="#222" opacity="0.87"/><rect x="204.5" y="662.7" width="2.7" height="1.2" fill="#222" opacity="0.72"/><rect x="103.5" y="664.8" width="6.7" height="1.2" fill="#222" opacity="0.82"/><rect x="111.2" y="664.8" width="5.3" height="1.2" fill="#222" opacity="0.88"/><rect x="117.7" y="664.8" width="7.8" height="1.2" fill="#222" opacity="0.72"/><rect x="126.2" y="664.8" width="5.8" height="1.2" fill="#222" opacity="0.85"/><rect x="133.0" y="664.8" width="5.6" height="1.2" fill="#222" opacity="0.73"/><rect x="139.7" y="664.8" width="4.2" height="1.2" fill="#222" opacity="0.63"/><rect x="145.0" y="664.8" width="8.1" height="1.2" fill="#222" opacity="0.81"/><rect x="154.0" y="664.8" width="7.1" height="1.2" fill="#222" opacity="0.70"/><rect x="162.0" y="664.8" width="2.6" height="1.2" fill="#222" opacity="0.65"/><rect x="165.4" y="664.8" width="5.4" height="1.2" fill="#222" opacity="0.72"/><rect x="171.4" y="664.8" width="6.7" height="1.2" fill="#222" opacity="0.75"/><rect x="178.8" y="664.8" width="4.1" height="1.2" fill="#222" opacity="0.72"/><rect x="183.6" y="664.8" width="2.5" height="1.2" fill="#222" opacity="0.86"/><rect x="187.3" y="664.8" width="6.5" height="1.2" fill="#222" opacity="0.84"/><rect x="194.7" y="664.8" width="7.4" height="1.2" fill="#222" opacity="0.67"/><rect x="203.1" y="664.8" width="4.1" height="1.2" fill="#222" opacity="0.85"/><rect x="103.5" y="666.9" width="7.3" height="1.2" fill="#222" opacity="0.65"/><rect x="111.8" y="666.9" width="8.4" height="1.2" fill="#222" opacity="0.62"/><rect x="120.9" y="666.9" width="4.1" height="1.2" fill="#222" opacity="0.70"/><rect x="125.5" y="666.9" width="8.0" height="1.2" fill="#222" opacity="0.83"/><rect x="134.3" y="666.9" width="4.5" height="1.2" fill="#222" opacity="0.77"/><rect x="139.4" y="666.9" width="2.3" height="1.2" fill="#222" opacity="0.85"/><rect x="142.4" y="666.9" width="5.4" height="1.2" fill="#222" opacity="0.86"/><rect x="149.0" y="666.9" width="5.2" height="1.2" fill="#222" opacity="0.67"/><rect x="155.0" y="666.9" width="8.2" height="1.2" fill="#222" opacity="0.85"/><rect x="163.8" y="666.9" width="7.7" height="1.2" fill="#222" opacity="0.71"/><rect x="172.3" y="666.9" width="3.2" height="1.2" fill="#222" opacity="0.85"/><rect x="176.8" y="666.9" width="3.4" height="1.2" fill="#222" opacity="0.78"/><rect x="180.9" y="666.9" width="7.9" height="1.2" fill="#222" opacity="0.63"/><rect x="189.4" y="666.9" width="6.9" height="1.2" fill="#222" opacity="0.70"/><rect x="197.5" y="666.9" width="7.9" height="1.2" fill="#222" opacity="0.80"/><rect x="205.9" y="666.9" width="1.2" height="1.2" fill="#222" opacity="0.86"/><rect x="103.5" y="669.0" width="2.6" height="1.2" fill="#222" opacity="0.67"/><rect x="106.9" y="669.0" width="6.8" height="1.2" fill="#222" opacity="0.67"/><rect x="114.3" y="669.0" width="3.7" height="1.2" fill="#222" opacity="0.79"/><rect x="119.1" y="669.0" width="4.6" height="1.2" fill="#222" opacity="0.79"/><rect x="124.8" y="669.0" width="6.0" height="1.2" fill="#222" opacity="0.68"/><rect x="131.5" y="669.0" width="8.2" height="1.2" fill="#222" opacity="0.79"/><rect x="140.5" y="669.0" width="6.3" height="1.2" fill="#222" opacity="0.64"/><rect x="148.0" y="669.0" width="5.0" height="1.2" fill="#222" opacity="0.76"/><rect x="153.9" y="669.0" width="2.4" height="1.2" fill="#222" opacity="0.77"/><rect x="157.0" y="669.0" width="3.8" height="1.2" fill="#222" opacity="0.83"/><rect x="161.4" y="669.0" width="4.0" height="1.2" fill="#222" opacity="0.82"/><rect x="166.1" y="669.0" width="3.9" height="1.2" fill="#222" opacity="0.76"/><rect x="170.7" y="669.0" width="8.0" height="1.2" fill="#222" opacity="0.88"/><rect x="179.3" y="669.0" width="5.2" height="1.2" fill="#222" opacity="0.81"/><rect x="185.2" y="669.0" width="8.3" height="1.2" fill="#222" opacity="0.75"/><rect x="194.1" y="669.0" width="5.8" height="1.2" fill="#222" opacity="0.79"/><rect x="200.7" y="669.0" width="6.5" height="1.2" fill="#222" opacity="0.82"/><rect x="111.2" y="671.1" width="5.4" height="0.9" fill="#222" opacity="0.57"/><rect x="117.6" y="671.1" width="5.5" height="0.9" fill="#222" opacity="0.59"/><rect x="123.8" y="671.1" width="7.3" height="0.9" fill="#222" opacity="0.45"/><rect x="132.0" y="671.1" width="3.7" height="0.9" fill="#222" opacity="0.50"/><rect x="136.8" y="671.1" width="7.3" height="0.9" fill="#222" opacity="0.56"/><rect x="144.8" y="671.1" width="1.3" height="0.9" fill="#222" opacity="0.46"/><rect x="103.5" y="677.1" width="49.6" height="0.5" fill="#444" opacity="0.85"/><rect x="104.2" y="675.0" width="5.4" height="0.9" fill="#222" opacity="0.43"/><rect x="110.6" y="675.0" width="0.6" height="0.9" fill="#222" opacity="0.52"/><rect x="157.4" y="675.0" width="3.3" height="1.0" fill="#222" opacity="0.56"/><rect x="161.3" y="675.0" width="5.4" height="1.0" fill="#222" opacity="0.62"/><rect x="167.5" y="675.0" width="1.3" height="1.0" fill="#222" opacity="0.70"/><rect x="168.8" y="677.1" width="38.4" height="0.5" fill="#444" opacity="0.85"/><rect x="182.8" y="678.1" width="8.1" height="0.9" fill="#222" opacity="0.52"/><rect x="191.8" y="678.1" width="1.5" height="0.9" fill="#222" opacity="0.46"/><rect x="111.2" y="684.0" width="41.9" height="0.5" fill="#444" opacity="0.85"/><rect x="103.5" y="682.6" width="4.2" height="1.0" fill="#222" opacity="0.50"/><rect x="108.4" y="682.6" width="2.4" height="1.0" fill="#222" opacity="0.60"/><rect x="160.1" y="682.3" width="6.0" height="1.2" fill="#222" opacity="0.58"/><rect x="167.2" y="682.3" width="2.5" height="1.2" fill="#222" opacity="0.62"/><rect x="168.8" y="684.0" width="38.4" height="0.5" fill="#444" opacity="0.85"/><rect x="172.3" y="684.7" width="6.7" height="1.2" fill="#222" opacity="0.76"/><rect x="180.0" y="684.7" width="2.5" height="1.2" fill="#222" opacity="0.66"/><rect x="183.3" y="684.7" width="3.5" height="1.2" fill="#222" opacity="0.79"/><rect x="187.4" y="684.7" width="5.3" height="1.2" fill="#222" opacity="0.74"/><rect x="193.9" y="684.7" width="3.1" height="1.2" fill="#222" opacity="0.67"/><rect x="198.0" y="684.7" width="2.4" height="1.2" fill="#222" opacity="0.62"/><rect x="201.5" y="684.7" width="2.2" height="1.2" fill="#222" opacity="0.65"/><rect x="127.8" y="684.7" width="4.9" height="0.9" fill="#222" opacity="0.36"/><rect x="133.2" y="684.7" width="1.5" height="0.9" fill="#222" opacity="0.46"/><rect x="99.7" y="690.0" width="3.6" height="1.0" fill="#222" opacity="0.58"/><rect x="104.2" y="690.0" width="3.5" height="1.0" fill="#222" opacity="0.63"/><rect x="141.7" y="690.0" width="4.5" height="1.0" fill="#222" opacity="0.56"/><rect x="147.5" y="690.0" width="6.1" height="1.0" fill="#222" opacity="0.50"/><rect x="154.4" y="690.0" width="6.4" height="1.0" fill="#222" opacity="0.50"/><rect x="161.6" y="690.0" width="4.6" height="1.0" fill="#222" opacity="0.67"/><rect x="198.5" y="690.0" width="8.0" height="1.0" fill="#222" opacity="0.63"/><rect x="207.2" y="690.0" width="0.7" height="1.0" fill="#222" opacity="0.61"/></svg>
<span class="t" style="left:148.52px;top:705.00px;font-size:13.5px;line-height:13.5px;font-weight:400;color:#474d66;">2</span>
<div class="abs" style="left:95.5px;top:736px;width:115.5px;height:60px;border:1px solid #f5f5f7;border-radius:3px;box-sizing:border-box;background:#fff;box-shadow:0 0 3px rgba(0,0,0,.05)"></div>
<div class="abs" style="left:300px;top:331.2px;width:1210px;height:460px;background:#fff;box-shadow:0 0 9px rgba(30,40,80,.075)"></div>
<svg class="abs" style="left:338px;top:367px" width="60" height="46" viewBox="338 367 60 46" fill="none" stroke="#222" stroke-width="1.2" stroke-linejoin="round" stroke-linecap="round">
<path d="M382.3,372.5 L382.4,370.4 C382,369.6 381,369.8 380,369.9 L372,370 C370.6,370 369.6,370.4 368.6,371.4 L365.8,374 C364.6,375.2 363.2,376.2 362.8,377.4 C362.6,378.6 364.2,379.6 363.6,380.8 C363,382.2 361,383.4 359.4,383.8 L347.2,384.6 C345.6,384.8 344.2,385.8 344.4,387 C344.6,388.2 346.2,389.2 345.6,390.4 C344.8,392 341.4,393.2 340.6,394.6 C340,395.8 340.2,397 341.6,397.2 L368.6,397.4 C370.6,397.6 371.4,398.2 372.6,399.4 L376,402.4 C377.6,403.8 378.8,404.8 378.8,406 L378.2,408.8 C378,409.6 378.6,409.6 379.4,409.4 L389.6,406.2 C391,405.6 391,405 389.6,405.2 L381.8,405.8 L382.3,398.6"/>
</svg>
<div class="abs" style="left:378px;top:375.5px;width:52px;height:22px;background:#fff"></div>
<span class="t" style="left:378.22px;top:376.00px;font-size:8.7px;line-height:8.7px;font-weight:700;color:#1c1c1c;letter-spacing:0.263px;-webkit-text-stroke:0.3px #1c1c1c;">NEW YORK</span>
<span class="t" style="left:378.55px;top:386.00px;font-size:5.5px;line-height:5.5px;font-weight:400;color:#2a2a2a;letter-spacing:0.256px;-webkit-text-stroke:0.2px #2a2a2a;">STATE OF</span>
<span class="t" style="left:378.54px;top:393.00px;font-size:5.5px;line-height:5.5px;font-weight:400;color:#2a2a2a;letter-spacing:0.428px;-webkit-text-stroke:0.2px #2a2a2a;">OPPORTUNITY.</span>
<div class="abs" style="left:433.8px;top:370px;width:1.3px;height:39px;background:#222"></div>
<span class="t" style="left:439.02px;top:376.00px;font-size:14.6px;line-height:14.6px;font-weight:700;color:#222;letter-spacing:0.302px;">Department of</span>
<span class="t" style="left:439.02px;top:391.00px;font-size:14.6px;line-height:14.6px;font-weight:700;color:#222;letter-spacing:0.106px;">Motor Vehicles</span>
<div class="abs" style="left:595.5px;top:367px;width:368.5px;height:53px;background:#000"></div>
<div class="abs" style="left:598.5px;top:370px;width:362.5px;height:47px;border:1px solid #2c2c2c;box-sizing:border-box"></div>
<span class="t" style="left:610.34px;top:372.00px;font-size:23.3px;line-height:23.3px;font-weight:700;color:#fff;letter-spacing:-0.526px;">VEHICLE REGISTRATION/TITLE</span>
<span class="t" style="left:702.42px;top:395.00px;font-size:23.3px;line-height:23.3px;font-weight:700;color:#fff;letter-spacing:-0.124px;">APPLICATION</span>
<div class="abs" style="left:970px;top:366.8px;width:503.8px;height:113.4px;background:#cbcbcb;border:1.4px solid #222;box-sizing:border-box"></div>
<div class="abs" style="left:970px;top:411.4px;width:420px;height:1.2px;background:#333"></div>
<div class="abs" style="left:1389px;top:366.8px;width:1.4px;height:113.4px;background:#222"></div>
<div class="abs" style="left:1389px;top:422.6px;width:84.5px;height:1.2px;background:#222"></div>
<div class="abs" style="left:1418.6px;top:409px;width:1.1px;height:14px;background:#222"></div>
<div class="abs" style="left:1445.6px;top:409px;width:1.1px;height:14px;background:#222"></div>
<div class="abs" style="left:1417px;top:467px;width:1.1px;height:13px;background:#222"></div>
<div class="abs" style="left:1444px;top:467px;width:1.1px;height:13px;background:#222"></div>
<span class="t" style="left:1127.43px;top:370.00px;font-size:13.9px;line-height:13.9px;font-weight:700;color:#0a0a0a;letter-spacing:-0.029px;">Office Use Only</span>
<span class="t" style="left:974.44px;top:376.00px;font-size:14.1px;line-height:14.1px;font-weight:400;color:#0a0a0a;letter-spacing:0.181px;">Batch</span>
<span class="t" style="left:974.44px;top:391.00px;font-size:14.1px;line-height:14.1px;font-weight:400;color:#0a0a0a;letter-spacing:0.040px;">File No.</span>
<div class="cb" style="left:974.9px;top:415.2px;width:16px;height:15.3px;border-width:2px"></div>
<div class="cb" style="left:974.9px;top:435.2px;width:16px;height:15.3px;border-width:2px"></div>
<div class="cb" style="left:974.9px;top:455.7px;width:16px;height:15.3px;border-width:2px"></div>
<div class="cb" style="left:1048px;top:415.2px;width:16px;height:15.3px;border-width:2px"></div>
<div class="cb" style="left:1048px;top:435.2px;width:16px;height:15.3px;border-width:2px"></div>
<div class="cb" style="left:1164.2px;top:415.2px;width:16px;height:15.3px;border-width:2px"></div>
<div class="cb" style="left:1164.2px;top:435.2px;width:16px;height:15.3px;border-width:2px"></div>
<div class="cb" style="left:1164.2px;top:455.7px;width:16px;height:15.3px;border-width:2px"></div>
<div class="cb" style="left:1279px;top:418.8px;width:16px;height:15.3px;border-width:2px"></div>
<span class="t" style="left:996.13px;top:419.00px;font-size:14.1px;line-height:14.1px;font-weight:400;color:#0a0a0a;letter-spacing:-0.121px;">Orig</span>
<span class="t" style="left:995.64px;top:439.00px;font-size:14.1px;line-height:14.1px;font-weight:400;color:#0a0a0a;letter-spacing:0.045px;">Dup</span>
<span class="t" style="left:996.16px;top:459.00px;font-size:14.1px;line-height:14.1px;font-weight:400;color:#0a0a0a;letter-spacing:-0.428px;">Sales Tax with Title</span>
<span class="t" style="left:1069.27px;top:419.00px;font-size:14.1px;line-height:14.1px;font-weight:400;color:#0a0a0a;letter-spacing:-0.155px;">Activity</span>
<span class="t" style="left:1069.27px;top:439.00px;font-size:14.1px;line-height:14.1px;font-weight:400;color:#0a0a0a;letter-spacing:-0.479px;">Activity W/RR</span>
<span class="t" style="left:1185.14px;top:419.00px;font-size:14.1px;line-height:14.1px;font-weight:400;color:#0a0a0a;letter-spacing:-0.007px;">Renewal</span>
<span class="t" style="left:1185.14px;top:439.00px;font-size:14.1px;line-height:14.1px;font-weight:400;color:#0a0a0a;letter-spacing:-0.507px;">Renew W/RR</span>
<span class="t" style="left:1185.66px;top:459.00px;font-size:14.1px;line-height:14.1px;font-weight:400;color:#0a0a0a;letter-spacing:-0.019px;">Sales Tax Only without Title</span>
<span class="t" style="left:1300.14px;top:422.00px;font-size:14.1px;line-height:14.1px;font-weight:400;color:#0a0a0a;letter-spacing:-0.095px;">Lease Buyout</span>
<span class="t" style="left:1392.01px;top:369.00px;font-size:11.6px;line-height:11.6px;font-weight:400;color:#0a0a0a;letter-spacing:0.402px;">Class</span>
<span class="t" style="left:1392.34px;top:427.00px;font-size:11.6px;line-height:11.6px;font-weight:400;color:#0a0a0a;letter-spacing:0.154px;">Three of Name</span>
<span class="t" style="left:337.06px;top:421.00px;font-size:20px;line-height:20px;font-weight:700;color:#0a0a0a;letter-spacing:0.699px;">INSTRUCTIONS:</span>
<span class="t" style="left:339.97px;top:448.00px;font-size:15.4px;line-height:15.4px;font-weight:400;color:#0a0a0a;letter-spacing:0.166px;">A. Is this vehicle being registered only for personal use?</span>
<div class="ring" style="left:738.1px;top:440.2px;width:22.4px;height:22.4px"></div>
<div class="ring" style="left:792.4px;top:440.2px;width:22.4px;height:22.4px"></div>
<div class="cb" style="left:737.4px;top:444.4px;width:15.8px;height:15.8px;border-width:2px"></div>
<span class="t" style="left:760.06px;top:448.00px;font-size:15.4px;line-height:15.4px;font-weight:400;color:#0a0a0a;letter-spacing:0.293px;">Yes</span>
<div class="cb" style="left:792px;top:444.4px;width:16px;height:15.8px;border-width:2px"></div>
<span class="t" style="left:812.54px;top:448.00px;font-size:15.4px;line-height:15.4px;font-weight:400;color:#0a0a0a;letter-spacing:0.822px;">No</span>
<span class="t" style="left:359.88px;top:471.00px;font-size:15.4px;line-height:15.4px;font-weight:400;color:#0a0a0a;letter-spacing:0.209px;">If <b>YES - </b>Complete sections <b>1-4</b> of this form.</span>
<span class="t" style="left:373.47px;top:491.00px;font-size:15.4px;line-height:15.4px;font-weight:700;color:#0a0a0a;letter-spacing:0.284px;">Note</span>
<span class="t" style="left:406.99px;top:491.00px;font-size:15.4px;line-height:15.4px;font-weight:400;color:#0a0a0a;letter-spacing:0.307px;">: If this vehicle is a</span>
<span class="t" style="left:542.78px;top:491.00px;font-size:15.4px;line-height:15.4px;font-weight:700;color:#0a0a0a;letter-spacing:0.402px;">pick-up</span>
<span class="t" style="left:604.07px;top:491.00px;font-size:15.4px;line-height:15.4px;font-weight:400;color:#0a0a0a;letter-spacing:0.212px;">truck with an unladen weight that is a maximum of 6,000 pounds, is never used for commercial purposes and does not have</span>
<span class="t" style="left:373.55px;top:511.00px;font-size:15.4px;line-height:15.4px;font-weight:400;color:#0a0a0a;letter-spacing:-0.171px;">advertising on any part of the truck, you are eligible for passenger plates or commercial plates.</span>
<span class="t" style="left:1003.16px;top:511.00px;font-size:15.4px;line-height:15.4px;font-weight:700;color:#0a0a0a;letter-spacing:0.262px;">Select one:</span>
<div class="ring" style="left:1094.4px;top:503.4px;width:22.4px;height:22.4px"></div>
<div class="ring" style="left:1271.4px;top:503.4px;width:22.4px;height:22.4px"></div>
<div class="cb" style="left:1094.8px;top:507.8px;width:15.6px;height:15.6px;border-width:2px"></div>
<span class="t" style="left:1116.97px;top:511.00px;font-size:15.4px;line-height:15.4px;font-weight:700;color:#0a0a0a;letter-spacing:0.225px;">Passenger Plates</span>
<div class="cb" style="left:1272.4px;top:507.8px;width:15.6px;height:15.6px;border-width:2px"></div>
<span class="t" style="left:1294.87px;top:511.00px;font-size:15.4px;line-height:15.4px;font-weight:700;color:#0a0a0a;letter-spacing:0.252px;">Commercial Plates</span>
<span class="t" style="left:359.88px;top:537.00px;font-size:15.4px;line-height:15.4px;font-weight:400;color:#0a0a0a;letter-spacing:0.208px;">If <b>NO - </b>Complete sections <b>1-5</b> of this form.</span>
<span class="t" style="left:338.74px;top:563.00px;font-size:15.4px;line-height:15.4px;font-weight:400;color:#0a0a0a;letter-spacing:0.219px;">B. Complete the Certification in Section 6.</span>
<span class="t" style="left:339.22px;top:585.00px;font-size:15.4px;line-height:15.4px;font-weight:400;color:#0a0a0a;letter-spacing:0.219px;">C. Refer to form MV-82.1 Registering/Titling a Vehicle in New York State for information to complete this form.</span>
<div class="abs" style="left:335.5px;top:607.4px;width:1136.5px;height:4.6px;background:#000"></div>
<div class="abs" style="left:335.5px;top:612px;width:26.3px;height:180px;background:#d9d9d9"></div>
<div class="abs" style="left:366.4px;top:616.4px;width:1105.8px;height:51.2px;border:1.5px solid #222;box-sizing:border-box"></div>
<div class="abs" style="left:1210.4px;top:616.6px;width:1.5px;height:51px;background:#222"></div>
<span class="t" style="left:376.96px;top:623.00px;font-size:15.6px;line-height:15.6px;font-weight:700;color:#0a0a0a;letter-spacing:0.253px;">I WANT TO:</span>
<div class="abs" style="left:512px;top:620.2px;width:19.2px;height:19.2px;border:1.2px solid #707070;box-sizing:border-box"></div>
<div class="ring" style="left:513.7px;top:617.3px;width:22.4px;height:22.4px"></div>
<div class="abs" style="left:512px;top:643.9px;width:19.2px;height:19.2px;border:1.2px solid #707070;box-sizing:border-box"></div>
<div class="ring" style="left:513.7px;top:641px;width:22.4px;height:22.4px"></div>
<div class="abs" style="left:739.5px;top:620.2px;width:19.2px;height:19.2px;border:1.2px solid #707070;box-sizing:border-box"></div>
<div class="ring" style="left:741.2px;top:617.3px;width:22.4px;height:22.4px"></div>
<div class="abs" style="left:739.5px;top:643.9px;width:19.2px;height:19.2px;border:1.2px solid #707070;box-sizing:border-box"></div>
<div class="ring" style="left:741.2px;top:641px;width:22.4px;height:22.4px"></div>
<div class="abs" style="left:1025.5px;top:620.2px;width:19.2px;height:19.2px;border:1.2px solid #707070;box-sizing:border-box"></div>
<div class="ring" style="left:1027.2px;top:617.3px;width:22.4px;height:22.4px"></div>
<div class="abs" style="left:1025.5px;top:643.9px;width:19.2px;height:19.2px;border:1.2px solid #707070;box-sizing:border-box"></div>
<div class="ring" style="left:1027.2px;top:641px;width:22.4px;height:22.4px"></div>
<span class="t" style="left:536.46px;top:626.00px;font-size:14px;line-height:14px;font-weight:700;color:#0a0a0a;letter-spacing:-0.012px;">REGISTER A VEHICLE</span>
<span class="t" style="left:536.23px;top:646.00px;font-size:14px;line-height:14px;font-weight:700;color:#0a0a0a;letter-spacing:-0.007px;">CHANGE A REGISTRATION</span>
<span class="t" style="left:763.56px;top:626.00px;font-size:14px;line-height:14px;font-weight:700;color:#0a0a0a;letter-spacing:0.036px;">RENEW A REGISTRATION</span>
<span class="t" style="left:763.56px;top:648.00px;font-size:14px;line-height:14px;font-weight:700;color:#0a0a0a;letter-spacing:-0.104px;">REPLACE LOST OR DAMAGED ITEMS</span>
<span class="t" style="left:1050.23px;top:626.00px;font-size:14px;line-height:14px;font-weight:700;color:#0a0a0a;letter-spacing:0.079px;">GET A TITLE ONLY</span>
<span class="t" style="left:1050.64px;top:649.00px;font-size:14px;line-height:14px;font-weight:700;color:#0a0a0a;letter-spacing:-0.029px;">TRANSFER PLATES</span>
<span class="t" style="left:1215.23px;top:621.00px;font-size:13.9px;line-height:13.9px;font-weight:700;color:#0a0a0a;letter-spacing:-0.021px;">Current Plate Number</span>
<div class="fld" style="left:1211.8px;top:633.2px;width:259.4px;height:33.2px;"></div>
<span class="t" style="left:367.66px;top:673.00px;font-size:14.1px;line-height:14.1px;font-weight:700;color:#0a0a0a;letter-spacing:-0.134px;">NAME OF PRIMARY REGISTRANT</span>
<span class="t" style="left:596.74px;top:673.00px;font-size:14.1px;line-height:14.1px;font-weight:400;color:#0a0a0a;font-style:italic;letter-spacing:-0.097px;">(Last, First, Middle or Business Name)</span>
<span class="t" style="left:1051.05px;top:675.00px;font-size:14.2px;line-height:14.2px;font-weight:700;color:#0a0a0a;letter-spacing:-0.250px;">FORMER NAME</span>
<span class="t" style="left:1159.85px;top:678.00px;font-size:11.8px;line-height:11.8px;font-weight:400;color:#0a0a0a;font-style:italic;letter-spacing:0.040px;">(If name was changed you must present proof)</span>
<div class="fld" style="left:367px;top:690px;width:571px;height:33.8px;"></div>
<div class="abs" style="left:937px;top:690px;width:108.6px;height:33.8px;border:1px solid #444;box-sizing:border-box;background:#fff"></div>
<div class="fld" style="left:1045.4px;top:690px;width:426.6px;height:33.8px;"></div>
<span class="t" style="left:943.22px;top:693.00px;font-size:11.9px;line-height:11.9px;font-weight:400;color:#0a0a0a;letter-spacing:0.082px;">Name Change</span>
<span class="t" style="left:943.89px;top:709.00px;font-size:14px;line-height:14px;font-weight:400;color:#0a0a0a;letter-spacing:0.685px;">Yes</span>
<div class="cb" style="left:973.2px;top:709px;width:12.8px;height:12.4px;border-width:2px"></div>
<div class="ring" style="left:973.85px;top:702.45px;width:19.5px;height:19.5px"></div>
<span class="t" style="left:998.85px;top:709.00px;font-size:14px;line-height:14px;font-weight:400;color:#0a0a0a;letter-spacing:0.630px;">No</span>
<div class="cb" style="left:1022.1px;top:709px;width:12.6px;height:12.4px;border-width:2px"></div>
<div class="ring" style="left:1023.05px;top:702.45px;width:19.5px;height:19.5px"></div>
<span class="t" style="left:398.07px;top:730.00px;font-size:13.9px;line-height:13.9px;font-weight:700;color:#0a0a0a;letter-spacing:-0.750px;">NYS driver license ID number of PRIMARY REGISTRANT</span>
<span class="t" style="left:748.25px;top:729.00px;font-size:14.2px;line-height:14.2px;font-weight:700;color:#0a0a0a;letter-spacing:-0.083px;">DATE OF BIRTH</span>
<span class="t" style="left:1031.82px;top:729.00px;font-size:14.2px;line-height:14.2px;font-weight:700;color:#0a0a0a;letter-spacing:-0.246px;">GENDER</span>
<span class="t" style="left:1199.24px;top:727.00px;font-size:14.2px;line-height:14.2px;font-weight:700;color:#0a0a0a;letter-spacing:-0.481px;">TELEPHONE or MOBILE PHONE NUMBER</span>
<div class="abs" style="left:398.2px;top:743px;width:331px;height:40px;border:2px solid #1c2230;box-sizing:border-box;background:#d7e8ff"></div>
<div class="abs" style="left:434.41px;top:745.2px;width:1px;height:38px;background:#bccfec"></div>
<div class="abs" style="left:471.72px;top:745.2px;width:1px;height:38px;background:#bccfec"></div>
<div class="abs" style="left:509.03px;top:745.2px;width:1px;height:38px;background:#bccfec"></div>
<div class="abs" style="left:546.34px;top:745.2px;width:1px;height:38px;background:#bccfec"></div>
<div class="abs" style="left:583.65px;top:745.2px;width:1px;height:38px;background:#bccfec"></div>
<div class="abs" style="left:620.96px;top:745.2px;width:1px;height:38px;background:#bccfec"></div>
<div class="abs" style="left:658.27px;top:745.2px;width:1px;height:38px;background:#bccfec"></div>
<div class="abs" style="left:695.58px;top:745.2px;width:1px;height:38px;background:#bccfec"></div>
<div class="abs" style="left:747.4px;top:743.6px;width:271.6px;height:40px;border:1.4px solid #222;box-sizing:border-box;background:#fff"></div>
<div class="fld" style="left:748.6px;top:758px;width:269.4px;height:26px;"></div>
<div class="abs" style="left:781.2px;top:759px;width:1px;height:24px;background:#b9cdec"></div>
<div class="abs" style="left:851px;top:759px;width:1px;height:24px;background:#b9cdec"></div>
<div class="abs" style="left:919.6px;top:759px;width:1px;height:24px;background:#b9cdec"></div>
<div class="abs" style="left:952.6px;top:759px;width:1px;height:24px;background:#b9cdec"></div>
<div class="abs" style="left:985.6px;top:759px;width:1px;height:24px;background:#b9cdec"></div>
<div class="abs" style="left:815.4px;top:750px;width:1px;height:32px;background:#333"></div>
<div class="abs" style="left:884.6px;top:750px;width:1px;height:32px;background:#333"></div>
<span class="t" style="left:749.85px;top:747.00px;font-size:11.6px;line-height:11.6px;font-weight:400;color:#0a0a0a;letter-spacing:0.468px;">Month</span>
<span class="t" style="left:827.25px;top:747.00px;font-size:11.6px;line-height:11.6px;font-weight:400;color:#0a0a0a;letter-spacing:0.575px;">Day</span>
<span class="t" style="left:899.75px;top:747.00px;font-size:11.6px;line-height:11.6px;font-weight:400;color:#0a0a0a;letter-spacing:0.337px;">Year</span>
<span class="t" style="left:756.34px;top:764.00px;font-size:11.9px;line-height:11.9px;font-weight:400;color:#333;letter-spacing:1.012px;">01</span>
<span class="t" style="left:823.74px;top:764.00px;font-size:11.9px;line-height:11.9px;font-weight:400;color:#333;letter-spacing:1.012px;">01</span>
<svg class="abs" style="left:800px;top:762px" width="84" height="10" viewBox="800 762 84 10" fill="none" stroke="#111" stroke-width="1.5"><path d="M803,764.6 L806.4,768 L809.8,764.6 M871.8,764.6 L875.2,768 L878.6,764.6"/></svg>
<div class="abs" style="left:1031.6px;top:743px;width:155.8px;height:40px;border:1.4px solid #222;box-sizing:border-box;background:#fff"></div>
<span class="t" style="left:1041.04px;top:755.00px;font-size:14.1px;line-height:14.1px;font-weight:400;color:#0a0a0a;letter-spacing:0.074px;">Male</span>
<div class="cb" style="left:1077.3px;top:755.2px;width:12.4px;height:11.8px;border-width:2px"></div>
<div class="ring" style="left:1078.3px;top:750.1px;width:19.2px;height:19.2px"></div>
<span class="t" style="left:1113.24px;top:755.00px;font-size:14.1px;line-height:14.1px;font-weight:400;color:#0a0a0a;letter-spacing:-0.283px;">Female</span>
<div class="cb" style="left:1164.2px;top:755.2px;width:12.4px;height:11.8px;border-width:2px"></div>
<div class="ring" style="left:1165.1px;top:750.1px;width:19.2px;height:19.2px"></div>
<div class="abs" style="left:1194.6px;top:743.6px;width:277.4px;height:40px;border:1.4px solid #222;box-sizing:border-box;background:#fff"></div>
<span class="t" style="left:1203.18px;top:747.00px;font-size:11.9px;line-height:11.9px;font-weight:400;color:#0a0a0a;letter-spacing:0.037px;">Area Code</span>
<span class="t" style="left:1199.53px;top:759.00px;font-size:14.1px;line-height:14.1px;font-weight:400;color:#0a0a0a;">(</span>
<span class="t" style="left:1259.12px;top:759.00px;font-size:14.1px;line-height:14.1px;font-weight:400;color:#0a0a0a;">)</span>
<div class="fld" style="left:1204.4px;top:757.6px;width:54.6px;height:26px;"></div>
<div class="fld" style="left:1263px;top:757.6px;width:208.6px;height:26px;"></div>
</div></div>
</body></html>
